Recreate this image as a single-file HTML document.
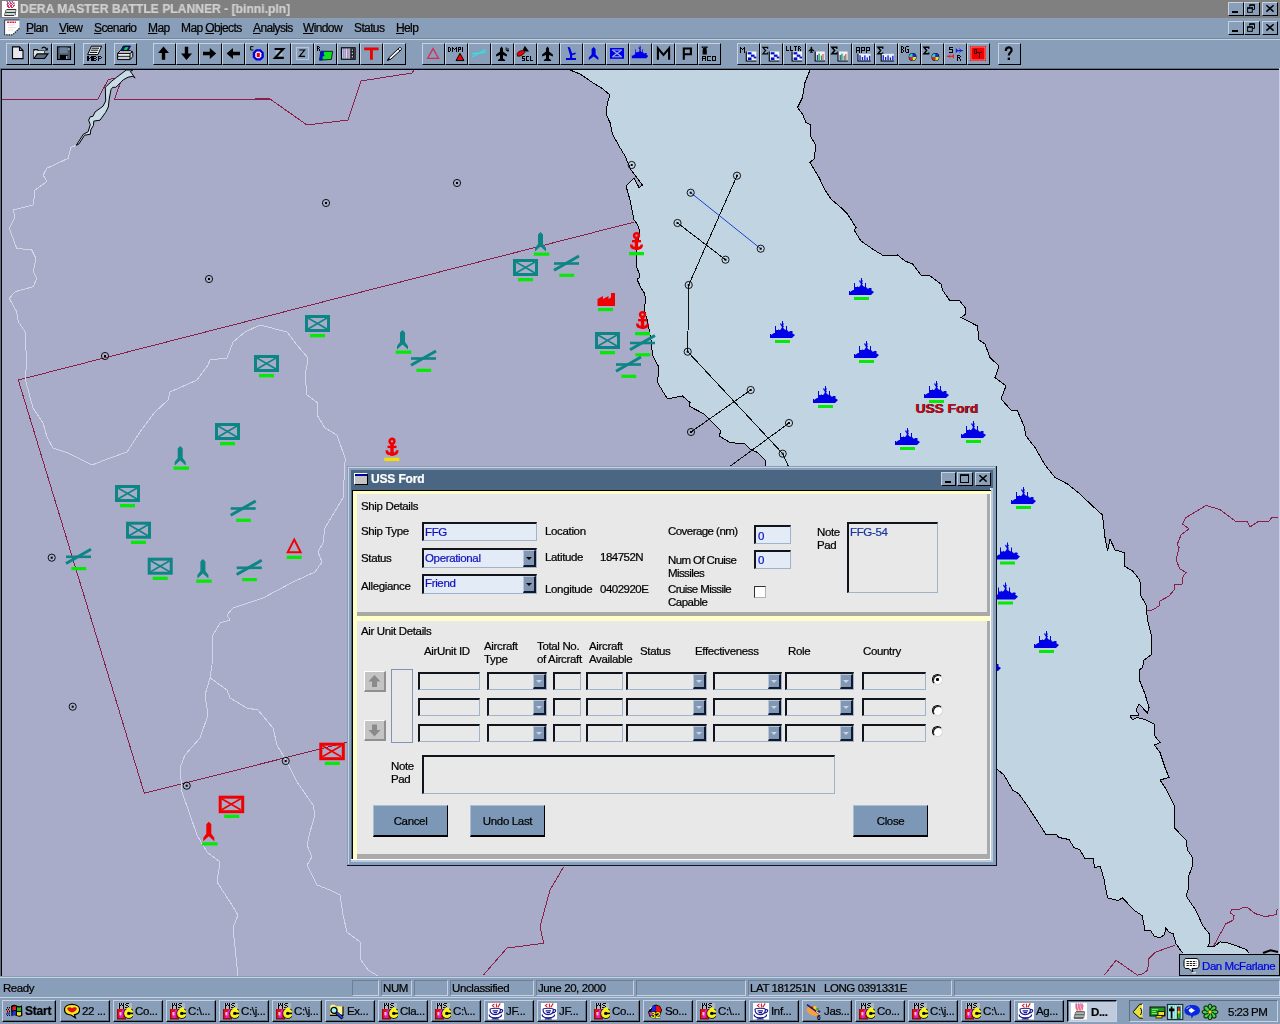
<!DOCTYPE html><html><head><meta charset="utf-8"><title>DERA MASTER BATTLE PLANNER</title><style>
*{box-sizing:border-box;margin:0;padding:0}
html,body{width:1280px;height:1024px;overflow:hidden}
body{position:relative;background:#899eb8;font-family:"Liberation Sans",sans-serif;font-size:11.5px;letter-spacing:-0.35px;color:#000;line-height:14px}
.a{position:absolute}
.t{position:absolute;white-space:nowrap;line-height:14px;height:14px;will-change:transform;-webkit-text-stroke:0.22px currentColor}
.tb{position:absolute;top:43px;width:23px;height:22px;background:#899eb8;border-top:1px solid #c4d2e2;border-left:1px solid #c4d2e2;border-right:1px solid #000;border-bottom:1px solid #000}
.tb svg{position:absolute;left:0;top:0}
.wb{position:absolute;width:16px;height:14px;background:#899eb8;border-top:1px solid #c4d2e2;border-left:1px solid #c4d2e2;border-right:1px solid #000;border-bottom:1px solid #000}
.sp{position:absolute;top:980px;height:16px;border-top:1px solid #6c7f96;border-left:1px solid #6c7f96;border-right:1px solid #c4d2e2;border-bottom:1px solid #c4d2e2}
.tk{position:absolute;top:1000px;width:50px;height:22px;background:#899eb8;border-top:1px solid #c4d2e2;border-left:1px solid #c4d2e2;border-right:1px solid #000;border-bottom:1px solid #000;box-shadow:inset -1px -1px 0 #5d6f86}
.tk .t{left:21px;top:3px;font-size:11.5px;letter-spacing:-0.35px}
.tk svg{position:absolute;left:3px;top:2px}
.f{position:absolute;background:#e8e8e8;border-top:2px solid #10141c;border-left:2px solid #10141c;border-right:1px solid #9fb3cb;border-bottom:1px solid #9fb3cb}
.f.b{background:#e2ebf6;color:#1212c0}
.cb{position:absolute;right:0;top:0;bottom:0;width:13px;background:#8197b3;border-top:1px solid #b8c8dc;border-left:1px solid #b8c8dc;border-right:2px solid #10182c;border-bottom:2px solid #10182c}
.cb:after{content:"";position:absolute;left:2px;top:6px;border-left:3px solid transparent;border-right:3px solid transparent;border-top:3px solid #000}
.cb.g:after{border-top-color:#c8d4e4;left:2px;top:5px}
.btn{position:absolute;width:75px;height:32px;background:#7d97b7;border-top:1px solid #a9bdd4;border-left:1px solid #a9bdd4;border-right:1px solid #000;border-bottom:2px solid #000;text-align:center}
.btn .t{left:0;right:0;top:8px;text-align:center}
.rd{position:absolute;width:11px;height:11px;border-radius:50%;background:#fff;border:1px solid;border-color:#000 #d8d8d8 #d8d8d8 #000;box-shadow:inset 1px 1px 0 #222}
</style></head><body>
<svg id="map" width="1280" height="1024" viewBox="0 0 1280 1024" style="position:absolute;left:0;top:0">
<defs>
<clipPath id="mc"><rect x="2" y="70" width="1277" height="906"/></clipPath>
<g id="ship"><path fill="#0000e6" d="M0,13 L1,13 L1,14 L4,12 L5,12 L5,5 L6,5 L6,9 L8,9 L8,8 L9,9 L10,9 L11,8 L12,6 L10,3 L11,2 L12,4 L12,0 L13,0 L13,2 L14,3 L13,4 L14,6 L13,6 L14,8 L16,9 L16,5 L17,5 L17,9 L18,10 L19,11 L20,10 L22,10 L23,11 L22,12 L25,14 L24,15 L22,17 L0,17 Z"/><rect x="5" y="19" width="15" height="3" fill="#08e808"/></g>
<g id="tbox"><rect x="1.5" y="1.5" width="22" height="14" fill="none" stroke="#0d8585" stroke-width="3"/><path d="M3,3 L22,14 M22,3 L3,14" stroke="#0d8585" stroke-width="1.6" fill="none"/><rect x="5" y="19" width="15" height="3.3" fill="#08e808"/></g>
<g id="rbox"><rect x="1.5" y="1.5" width="22.5" height="14.5" fill="none" stroke="#f00000" stroke-width="3"/><path d="M3,3 L22,14 M22,3 L3,14" stroke="#f00000" stroke-width="1.6" fill="none"/><rect x="5.5" y="19" width="15" height="3.3" fill="#08e808"/></g>
<g id="ty"><path fill="#0d8585" d="M5.5,0 L8,2.5 L8,12 L11,16 L11,19.5 L5.5,14.5 L0,19.5 L0,16 L3,12 L3,2.5 Z"/><rect x="-1.2" y="20.5" width="15.5" height="3.3" fill="#08e808"/></g>
<g id="ry"><path fill="#f00000" d="M5.5,0 L8,2.5 L8,12 L11,16 L11,19.5 L5.5,14.5 L0,19.5 L0,16 L3,12 L3,2.5 Z"/><rect x="-1.2" y="20.5" width="15.5" height="3.3" fill="#08e808"/></g>
<g id="tx"><path d="M0,8.5 H25" stroke="#0d8585" stroke-width="2.6"/><path d="M0,15.2 L25,1" stroke="#0d8585" stroke-width="3"/><rect x="5.4" y="18.7" width="14.8" height="3.2" fill="#08e808"/></g>
<g id="mk"><circle r="3.6" fill="none" stroke="#000" stroke-width="0.9"/><rect x="-1" y="-1" width="2" height="2" fill="#000"/></g>
<g id="anchor"><circle cx="6.5" cy="3.6" r="2.4" fill="none" stroke="#f00000" stroke-width="2.6"/><rect x="2" y="8" width="9" height="2.4" fill="#f00000"/><rect x="4.8" y="6" width="3.4" height="12" fill="#f00000"/><path d="M0,12.6 L2.4,12.6 C2.8,14.6 4,15 6.5,15 C9,15 10.2,14.6 10.6,12.6 L13,12.6 C13,17 10,18 6.5,18 C3,18 0,17 0,12.6 Z" fill="#f00000"/></g>
</defs>
<g clip-path="url(#mc)">
<rect x="0" y="66" width="1280" height="912" fill="#a8acc9"/>
<polygon points="570,70 580,74 592.5,82.5 602.5,88.7 610,95 607.5,102.5 606,114 610,122.5 612.5,134 619,146 625,156 631,170 635,175 642.5,185 639,187.5 634,178 626,186 630,200 634,220 637.8,225 640,232 636.25,250 636.25,265.6 639.4,274.4 639.4,278 637.5,278.4 637.8,281 641.5,288.75 644,292.5 646,299 644,309 647.5,321 651,340 652.5,355 659,367.5 657.5,382.5 665,395 667.5,399 682.5,396 690,402.5 689,406 704,414 721,431 719,436 730,442.5 745,444 750,449 757.5,452.5 765,460 766,466 997.5,769.5 1004,775 1012.5,790 1019,794 1027.5,806 1035,817.5 1046,834.5 1056,834 1059,837.5 1069,839.5 1074,847.5 1080,850 1085,858.4 1093.4,858.4 1094.4,867.8 1100,866 1103.75,878 1107.5,897.8 1117.8,900.6 1122.5,897.8 1133.75,910 1142.2,915.6 1145,930.6 1150.6,930.6 1154.4,936.25 1160,937.75 1164.7,934.4 1165.6,927.8 1169.4,932.5 1173,933.4 1176,943.75 1182.5,953 1190,976 1255,976 1249,953 1246.25,949.4 1227.5,942.8 1220,941.9 1214.4,946.6 1207.8,946.6 1209.7,942.8 1209.7,934.4 1203,926 1195.6,910 1188,898.75 1186.25,895 1188,890.3 1189,875 1192,867.5 1192.5,857.5 1187.5,850 1186,840 1174,827.5 1174,805 1166,789 1160,780 1169,777.5 1165,767.5 1160,752.5 1154.5,745 1160,742.5 1154,735 1154,724 1145,719.5 1137.5,717.5 1132.5,719.5 1130,716 1139,715 1136,710 1139,704 1147.5,713 1149,707.5 1145,694 1139,679 1139,670 1142.5,667.5 1144,660 1151,655 1151,634 1147.5,620 1146,605 1140,594 1141,585 1139,579 1132.5,571 1124,566 1124,552.5 1115,550 1110,539 1107.5,551 1105,537.5 1102.5,515 1092.5,506 1080,494 1067.5,484 1055,477.5 1045,465 1035,447.5 1026,436 1024,426 1017.5,411 1011,410 1001,399 1006,386 995,377.5 999,366 990,357.5 985,344 979,340 977.5,326 961,317.5 966,314 965,307.5 959,300 950,301 942.5,290 941,284 930,276 921,275 912.5,264 905,261 897.5,255 884,256 874,250 861,241 854,230 856,227.5 847.5,214 842.5,209 831,199 825,190 819,177.5 810,162.5 814,159 816,146 810,135 811,125 806,122.5 802.5,114 797.5,107.5 802.5,97.5 805,82.5 810,70" fill="#c0d4e1" stroke="none"/>
<polyline points="0,99.1 97.8,99.1 108.3,79.4 116.2,78.1 120.6,82 114.5,99.1 270,99 307,125 348,120 361,81 412,73 414,70" fill="none" stroke="#8a2048" stroke-width="1" shape-rendering="crispEdges"/>
<polyline points="634.5,222 18.3,380 144.3,793.3 346.7,742.3" fill="none" stroke="#8a2048" stroke-width="1" shape-rendering="crispEdges"/>
<polyline points="1146,610.5 1152.5,610 1159,606 1160,601 1169,596 1174,590 1175,584.5 1182.5,584 1182.5,577.5 1186,572.5 1180,569 1176,560 1179,547.5 1177,545 1181,535 1189,529 1182.5,524 1186,517.5 1206,505.5 1220,509.5 1235,521 1247.5,522 1250,527 1259,521 1269,521 1272.5,517 1278,517" fill="none" stroke="#8a2048" stroke-width="1" shape-rendering="crispEdges"/>
<polyline points="563.7,866.7 550,890 540,926.7 543.7,943.3 507,948 483.7,974.7" fill="none" stroke="#8a2048" stroke-width="1" shape-rendering="crispEdges"/>
<polyline points="1175,945.25 1155.3,952.2 1148.75,958.75 1147.8,970 1143,973.75 1137.5,975.25 1116,960.25 1104.7,974.7" fill="none" stroke="#8a2048" stroke-width="1" shape-rendering="crispEdges"/>
<polyline points="1213.4,946.6 1225.6,924 1233,920.3 1234,915.6 1230.3,912.8 1231.25,910 1238.75,909.6 1243.4,907.2 1248,908 1255.6,913.75 1265,916.6 1276.25,914.7 1277.2,909" fill="none" stroke="#8a2048" stroke-width="1" shape-rendering="crispEdges"/>
<polyline points="76.3,145.3 71,147.5 68.3,158.3 46.7,168.3 43.3,175 46.7,181.7 35,190 33.3,205 13.3,210 15,216.7 9.3,228.3 16.7,248.3 31.7,250 36,258.3 33.3,271.7 36.7,278.3 33.3,286.7 15,291.7 9.3,298.3 16.7,311.7 18.3,321.7 25,331.7 26.7,364.7 25,378 33,408 43,423 47,437 53,448 68,453 92,465 110,458 127,452 140,432 155,412 168,400 170,392 197,380 208,365 210,360 227,358 233,342 245,332 260,325 287,332 297,345 308,358 307,365 305,375 307,395 318,403 317,415 325,428 337,435 345,458 345,462 343,498 325,528 323,543 318,552 322,562 315,572 293,582 263,598 233,608 227,615 230,620 220,623 213,635 212,665 210,678 205,695 208,715 200,738 185,755 180,768 182,792 190,815 197,835 207,852 220,862 217,882 230,902 238,915 233,928 238,976" fill="none" stroke="#d0d8e8" stroke-width="1" shape-rendering="crispEdges"/>
<polyline points="210,678 213,680 227,690 230,698 247,708 258,710 273,728 277,745 287,762 297,782 313,805 315,815 310,832 307,845 312,857 307,865 317,885 330,890 340,895 343,915 347,932 360,942 361,960 368,970 378,976" fill="none" stroke="#d0d8e8" stroke-width="1" shape-rendering="crispEdges"/>
<polygon points="126.3,70 116.2,77.6 111.8,81.1 105.3,87.3 105.7,100.9 103,106.2 95.1,111.9 93,116.3 90.3,116.7 88.6,120.2 90.3,124.6 88.1,131.7 83.3,134.3 76.3,145.3 78.9,144 84.6,135.2 90.3,134.3 90.8,129.9 93.4,125.5 93.8,121.1 100,120.2 105.7,112.3 108.3,107 109.2,99.1 111,89.5 112.7,87.3 115.8,87.3 120.6,82.5 123.3,79.8 128.1,77.2 132.9,76.3 135.1,78.1 132,73.7 130.3,71.5 132.9,70" fill="#c8dce8" stroke="#000" stroke-width="1"/>
<polyline points="570,70 580,74 592.5,82.5 602.5,88.7 610,95 607.5,102.5 606,114 610,122.5 612.5,134 619,146 625,156 631,170 635,175 642.5,185 639,187.5 634,178 626,186 630,200 634,220 637.8,225 640,232 636.25,250 636.25,265.6 639.4,274.4 639.4,278 637.5,278.4 637.8,281 641.5,288.75 644,292.5 646,299 644,309 647.5,321 651,340 652.5,355 659,367.5 657.5,382.5 665,395 667.5,399 682.5,396 690,402.5 689,406 704,414 721,431 719,436 730,442.5 745,444 750,449 757.5,452.5 765,460 766,466" fill="none" stroke="#000" stroke-width="1" shape-rendering="crispEdges"/>
<polyline points="997.5,769.5 1004,775 1012.5,790 1019,794 1027.5,806 1035,817.5 1046,834.5 1056,834 1059,837.5 1069,839.5 1074,847.5 1080,850 1085,858.4 1093.4,858.4 1094.4,867.8 1100,866 1103.75,878 1107.5,897.8 1117.8,900.6 1122.5,897.8 1133.75,910 1142.2,915.6 1145,930.6 1150.6,930.6 1154.4,936.25 1160,937.75 1164.7,934.4 1165.6,927.8 1169.4,932.5 1173,933.4 1176,943.75 1182.5,953" fill="none" stroke="#000" stroke-width="1" shape-rendering="crispEdges"/>
<polyline points="810,70 805,82.5 802.5,97.5 797.5,107.5 802.5,114 806,122.5 811,125 810,135 816,146 814,159 810,162.5 819,177.5 825,190 831,199 842.5,209 847.5,214 856,227.5 854,230 861,241 874,250 884,256 897.5,255 905,261 912.5,264 921,275 930,276 941,284 942.5,290 950,301 959,300 965,307.5 966,314 961,317.5 977.5,326 979,340 985,344 990,357.5 999,366 995,377.5 1006,386 1001,399 1011,410 1017.5,411 1024,426 1026,436 1035,447.5 1045,465 1055,477.5 1067.5,484 1080,494 1092.5,506 1102.5,515 1105,537.5 1107.5,551 1110,539 1115,550 1124,552.5 1124,566 1132.5,571 1139,579 1141,585 1140,594 1146,605 1147.5,620 1151,634 1151,655 1144,660 1142.5,667.5 1139,670 1139,679 1145,694 1149,707.5 1147.5,713 1139,704 1136,710 1139,715 1130,716 1132.5,719.5 1137.5,717.5 1145,719.5 1154,724 1154,735 1160,742.5 1154.5,745 1160,752.5 1165,767.5 1169,777.5 1160,780 1166,789 1174,805 1174,827.5 1186,840 1187.5,850 1192.5,857.5 1192,867.5 1189,875 1188,890.3 1186.25,895 1188,898.75 1195.6,910 1203,926 1209.7,934.4 1209.7,942.8 1207.8,946.6 1214.4,946.6 1220,941.9 1227.5,942.8 1246.25,949.4 1249,953" fill="none" stroke="#000" stroke-width="1" shape-rendering="crispEdges"/>
<polyline points="1263,953 1270.6,950.3 1278,952" fill="none" stroke="#000" stroke-width="2"/>
<polyline points="737,175.7 688.7,285 687.7,351.7 782.7,453.7 790,470" fill="none" stroke="#101010" stroke-width="1" shape-rendering="crispEdges"/>
<polyline points="677.5,223 725.5,259.7" fill="none" stroke="#101010" stroke-width="1" shape-rendering="crispEdges"/>
<polyline points="750.7,390 691,432" fill="none" stroke="#101010" stroke-width="1" shape-rendering="crispEdges"/>
<polyline points="789,423 725,470" fill="none" stroke="#101010" stroke-width="1" shape-rendering="crispEdges"/>
<polyline points="690.7,192.7 760.7,248.7" fill="none" stroke="#2040d0" stroke-width="1"/>
<use href="#mk" x="326" y="203"/>
<use href="#mk" x="209" y="279"/>
<use href="#mk" x="105" y="356"/>
<use href="#mk" x="457" y="183"/>
<use href="#mk" x="631.7" y="165"/>
<use href="#mk" x="737" y="175.7"/>
<use href="#mk" x="690.7" y="192.7"/>
<use href="#mk" x="677.5" y="223"/>
<use href="#mk" x="760.7" y="248.7"/>
<use href="#mk" x="725.5" y="259.7"/>
<use href="#mk" x="688.7" y="285"/>
<use href="#mk" x="687.7" y="351.7"/>
<use href="#mk" x="750.7" y="390"/>
<use href="#mk" x="691" y="432"/>
<use href="#mk" x="789" y="423"/>
<use href="#mk" x="782.7" y="453.7"/>
<use href="#mk" x="51.7" y="557.7"/>
<use href="#mk" x="72.7" y="706.7"/>
<use href="#mk" x="186.7" y="785.7"/>
<use href="#mk" x="285.7" y="761"/>
<use href="#ship" x="849" y="278"/>
<use href="#ship" x="770" y="321"/>
<use href="#ship" x="854" y="341"/>
<use href="#ship" x="813" y="386"/>
<use href="#ship" x="924" y="381"/>
<use href="#ship" x="895" y="428"/>
<use href="#ship" x="961" y="421"/>
<use href="#ship" x="1011" y="487"/>
<use href="#ship" x="995" y="542.5"/>
<use href="#ship" x="993" y="582.5"/>
<use href="#ship" x="1034" y="631"/>
<use href="#ship" x="976" y="654"/>
<use href="#tbox" x="513" y="259"/>
<use href="#tbox" x="305" y="315"/>
<use href="#tbox" x="254" y="355"/>
<use href="#tbox" x="595" y="332"/>
<use href="#tbox" x="215" y="423"/>
<use href="#tbox" x="115" y="485"/>
<use href="#tbox" x="126" y="521.7"/>
<use href="#tbox" x="147.7" y="557.7"/>
<use href="#ty" x="535" y="232"/>
<use href="#ty" x="397" y="330"/>
<use href="#ty" x="174.7" y="446"/>
<use href="#ty" x="197.4" y="559"/>
<use href="#tx" x="554" y="255"/>
<use href="#tx" x="411" y="350"/>
<use href="#tx" x="630" y="334.5"/>
<use href="#tx" x="616" y="356"/>
<use href="#tx" x="230.7" y="500"/>
<use href="#tx" x="66" y="548.3"/>
<use href="#tx" x="236.7" y="559.3"/>
<use href="#rbox" x="319.3" y="742.7"/>
<use href="#rbox" x="218.7" y="795.7"/>
<use href="#ry" x="203.3" y="821.7"/>
<use href="#anchor" x="630" y="232"/><rect x="629" y="252" width="15" height="3.3" fill="#08e808"/>
<use href="#anchor" x="636" y="311"/><rect x="635" y="332" width="15" height="3.3" fill="#08e808"/>
<use href="#anchor" x="385.5" y="437.7"/><rect x="384.3" y="457.7" width="15" height="3.3" fill="#f0e000"/>
<path fill="#f00000" d="M597.5,306 V299 L603,296 V299 L608.5,296 V299 L611,297.5 V293 H615 V306 Z"/><rect x="598" y="308" width="15" height="3.2" fill="#08e808"/>
<path fill="none" stroke="#f00000" stroke-width="1.9" d="M294.2,539.5 L300.7,552.3 L287.7,552.3 Z"/><rect x="286.7" y="555.7" width="15" height="3.3" fill="#08e808"/>
<text x="916" y="413.2" font-family="Liberation Sans, sans-serif" font-weight="bold" font-size="13.5" letter-spacing="0.15" fill="#000">USS Ford</text>
<text x="915.2" y="412.6" font-family="Liberation Sans, sans-serif" font-weight="bold" font-size="13.5" letter-spacing="0.15" fill="#c80818">USS Ford</text>
</g>
</svg>
<div class="a" style="left:0;top:66px;width:1280px;height:3px;background:#899eb8"></div>
<div class="a" style="left:0;top:68px;width:1280px;height:1px;background:#5f7188"></div>
<div class="a" style="left:1px;top:69px;width:1278px;height:1px;background:#000"></div>
<div class="a" style="left:0;top:68px;width:1px;height:909px;background:#5f7188"></div>
<div class="a" style="left:1px;top:69px;width:1px;height:907px;background:#000"></div>
<div class="a" style="left:1279px;top:68px;width:1px;height:909px;background:#c4d2e2"></div>
<div class="a" style="left:0;top:0;width:1280px;height:18px;background:#808080"></div>
<svg width="16" height="16" viewBox="0 0 16 16" style="position:absolute;left:2px;top:1px"><rect width="16" height="16" fill="#fff"/><path d="M4.5,0.5 H12 M5,1.5 H13 M4.5,3.5 H12.5" stroke="#9060b0" stroke-width="1" stroke-dasharray="1.5 1"/><path d="M5,2.5 H12.5 M5,4.5 H13 M5,5.5 H12 M6,6.5 H11" stroke="#e83050" stroke-width="1" stroke-dasharray="2 1"/><path d="M4.5,8.5 H14 M3.5,11.5 H13 M2.5,14.5 H12" stroke="#303838" stroke-width="1.2"/><path d="M4,9 L2.5,14.5 M14,8.5 L13,14.5" stroke="#505858" stroke-width="1" fill="none"/><path d="M4,10 H13.5 M3.4,13 H13" stroke="#a0a8a8" stroke-width="1"/></svg>
<div class="t" style="left:20px;top:1px;font-weight:bold;font-size:13px;letter-spacing:0;color:#d0d0d0;line-height:16px;height:16px;transform:scaleX(0.933);transform-origin:0 0">DERA MASTER BATTLE PLANNER - [binni.pln]</div>
<div class="wb" style="left:1228px;top:2px"><svg width="16" height="14" viewBox="0 0 16 14" style="position:absolute;left:-1px;top:-1px" shape-rendering="auto"><rect x="4" y="9" width="6" height="2" fill="#000"/></svg></div><div class="wb" style="left:1244px;top:2px"><svg width="16" height="14" viewBox="0 0 16 14" style="position:absolute;left:-1px;top:-1px" shape-rendering="auto"><path d="M5.8,4.8 V3 H10.5 V7.4 H8.8" fill="none" stroke="#000" stroke-width="1"/><rect x="5.3" y="2.3" width="5.7" height="1.4" fill="#000"/><rect x="3.6" y="6" width="4.7" height="4.3" fill="none" stroke="#000" stroke-width="1"/><rect x="3.1" y="5.3" width="5.7" height="1.4" fill="#000"/></svg></div><div class="wb" style="left:1262px;top:2px"><svg width="16" height="14" viewBox="0 0 16 14" style="position:absolute;left:-1px;top:-1px" shape-rendering="auto"><path d="M4.4,3.2 L11.6,9.6 M11.6,3.2 L4.4,9.6" stroke="#000" stroke-width="1.5"/></svg></div>
<div class="a" style="left:0;top:18px;width:1280px;height:20px;background:#899eb8"></div>
<svg width="17" height="17" viewBox="0 0 17 17" style="position:absolute;left:4px;top:19px"><path d="M0.6,1 H15.4 V9 L8.5,15.6 H0.6 Z" fill="#fff"/><path d="M0.6,15.8 V1 H15.4" fill="none" stroke="#202830" stroke-width="1" stroke-dasharray="1 0"/><path d="M15.4,9.4 L8.6,15.8 H0.6" fill="none" stroke="#101010" stroke-width="1.2" stroke-dasharray="1.2 1.2"/><path d="M3,3.2 H12" stroke="#e02040" stroke-width="1.6" stroke-dasharray="2 0.6"/><path d="M4,6 H11 M4,8.4 H12 M4,11 H9" stroke="#e8c8d4" stroke-width="0.7"/></svg>
<div class="t" style="left:26px;top:21px;font-size:12px;letter-spacing:-0.62px"><u>P</u>lan</div>
<div class="t" style="left:59px;top:21px;font-size:12px;letter-spacing:-0.62px"><u>V</u>iew</div>
<div class="t" style="left:94px;top:21px;font-size:12px;letter-spacing:-0.62px"><u>S</u>cenario</div>
<div class="t" style="left:148px;top:21px;font-size:12px;letter-spacing:-0.62px"><u>M</u>ap</div>
<div class="t" style="left:181px;top:21px;font-size:12px;letter-spacing:-0.62px">Map <u>O</u>bjects</div>
<div class="t" style="left:253px;top:21px;font-size:12px;letter-spacing:-0.62px"><u>A</u>nalysis</div>
<div class="t" style="left:303px;top:21px;font-size:12px;letter-spacing:-0.62px"><u>W</u>indow</div>
<div class="t" style="left:354px;top:21px;font-size:12px;letter-spacing:-0.62px">Status</div>
<div class="t" style="left:396px;top:21px;font-size:12px;letter-spacing:-0.62px"><u>H</u>elp</div>
<div class="wb" style="left:1228px;top:21px"><svg width="16" height="14" viewBox="0 0 16 14" style="position:absolute;left:-1px;top:-1px" shape-rendering="auto"><rect x="4" y="9" width="6" height="2" fill="#000"/></svg></div><div class="wb" style="left:1244px;top:21px"><svg width="16" height="14" viewBox="0 0 16 14" style="position:absolute;left:-1px;top:-1px" shape-rendering="auto"><path d="M5.8,4.8 V3 H10.5 V7.4 H8.8" fill="none" stroke="#000" stroke-width="1"/><rect x="5.3" y="2.3" width="5.7" height="1.4" fill="#000"/><rect x="3.6" y="6" width="4.7" height="4.3" fill="none" stroke="#000" stroke-width="1"/><rect x="3.1" y="5.3" width="5.7" height="1.4" fill="#000"/></svg></div><div class="wb" style="left:1262px;top:21px"><svg width="16" height="14" viewBox="0 0 16 14" style="position:absolute;left:-1px;top:-1px" shape-rendering="auto"><path d="M4.4,3.2 L11.6,9.6 M11.6,3.2 L4.4,9.6" stroke="#000" stroke-width="1.5"/></svg></div>
<div class="a" style="left:0;top:38px;width:1280px;height:1px;background:#74889f"></div>
<div class="a" style="left:0;top:39px;width:1280px;height:1px;background:#c4d2e2"></div>
<div class="tb" style="left:6px"><svg width="23" height="22" viewBox="0 0 23 22" style="position:absolute;left:-1px;top:-1px" shape-rendering="auto"><path d="M6.5,3.9 H13.5 L17,7.4 V15.6 H6.5 Z" fill="#e6e6ee" stroke="#000" stroke-width="1.1"/><path d="M13.5,3.9 V7.4 H17" fill="none" stroke="#000" stroke-width="1.1"/></svg></div>
<div class="tb" style="left:29px"><svg width="23" height="22" viewBox="0 0 23 22" style="position:absolute;left:-1px;top:-1px" shape-rendering="auto"><path d="M4.9,15.3 V6.6 H8.4 L9.4,8 H15 V10.6" fill="#dcdce0" stroke="#000" stroke-width="1.1"/><path d="M5,8 H15 V11 H8 L5,15 Z" fill="#e4e4e4"/><path d="M4.9,15.5 L8.2,10.9 H19 L15.6,15.5 Z" fill="#5c6c80" stroke="#000" stroke-width="1.1"/><path d="M12.7,5.6 C13.6,3.6 16.4,3.4 17.5,6.2" fill="none" stroke="#000" stroke-width="1.1"/><path d="M15.6,7.6 H18.8 V4.4 Z" fill="#000"/></svg></div>
<div class="tb" style="left:52px"><svg width="23" height="22" viewBox="0 0 23 22" style="position:absolute;left:-1px;top:-1px" shape-rendering="auto"><rect x="5.5" y="3.9" width="13" height="12.6" fill="#4e5a6a" stroke="#000" stroke-width="1.1"/><rect x="7.6" y="4.4" width="8" height="6" fill="#6c8098"/><rect x="16.4" y="5" width="1" height="2" fill="#c8d0dc"/><rect x="8" y="12" width="8" height="4.4" fill="#000"/><rect x="14" y="12.8" width="1.6" height="3.2" fill="#9aa8bc"/></svg></div>
<div class="tb" style="left:83px"><svg width="23" height="22" viewBox="0 0 23 22" style="position:absolute;left:-1px;top:-1px" shape-rendering="auto"><path d="M8.4,3.2 H18.6 L15,11.6 H4.6 Z" fill="#f2f4f8" stroke="#000" stroke-width="1"/><path d="M8.6,5.2 H16 M7.8,7.2 H15.2 M6.8,9.4 H14.2" stroke="#000" stroke-width="1"/><rect x="4" y="13" width="1" height="1" fill="#000"/><rect x="8" y="13" width="1" height="1" fill="#000"/><rect x="10" y="13" width="3" height="1" fill="#000"/><rect x="15" y="13" width="3" height="1" fill="#000"/><rect x="4" y="14" width="2" height="1" fill="#000"/><rect x="7" y="14" width="2" height="1" fill="#000"/><rect x="10" y="14" width="1" height="1" fill="#000"/><rect x="13" y="14" width="1" height="1" fill="#000"/><rect x="15" y="14" width="1" height="1" fill="#000"/><rect x="18" y="14" width="1" height="1" fill="#000"/><rect x="4" y="15" width="1" height="1" fill="#000"/><rect x="6" y="15" width="1" height="1" fill="#000"/><rect x="8" y="15" width="1" height="1" fill="#000"/><rect x="10" y="15" width="3" height="1" fill="#000"/><rect x="15" y="15" width="3" height="1" fill="#000"/><rect x="4" y="16" width="1" height="1" fill="#000"/><rect x="8" y="16" width="1" height="1" fill="#000"/><rect x="10" y="16" width="1" height="1" fill="#000"/><rect x="13" y="16" width="1" height="1" fill="#000"/><rect x="15" y="16" width="1" height="1" fill="#000"/><rect x="4" y="17" width="1" height="1" fill="#000"/><rect x="8" y="17" width="1" height="1" fill="#000"/><rect x="10" y="17" width="3" height="1" fill="#000"/><rect x="15" y="17" width="1" height="1" fill="#000"/><rect x="5" y="13" width="1" height="1" fill="#000"/><rect x="9" y="13" width="1" height="1" fill="#000"/><rect x="5" y="14" width="1" height="1" fill="#000"/><rect x="9" y="14" width="1" height="1" fill="#000"/><rect x="5" y="15" width="1" height="1" fill="#000"/><rect x="9" y="15" width="1" height="1" fill="#000"/><rect x="5" y="16" width="1" height="1" fill="#000"/><rect x="9" y="16" width="1" height="1" fill="#000"/><rect x="5" y="17" width="1" height="1" fill="#000"/><rect x="9" y="17" width="1" height="1" fill="#000"/></svg></div>
<div class="tb" style="left:114px"><svg width="23" height="22" viewBox="0 0 23 22" style="position:absolute;left:-1px;top:-1px" shape-rendering="auto"><path d="M6.4,8 L9.4,3 H16.5 L14,8 Z" fill="#0018a8" stroke="#000" stroke-width="0.8"/><path d="M9.8,6.8 L11.4,4.2 L14.3,4 L12.7,6.9 Z" fill="#10e020"/><path d="M3.6,10.4 L6.4,7.6 H16.6 L18.8,9.4 V13.6 L16,16.6 H3.6 Z" fill="#c8ccd4" stroke="#000" stroke-width="1"/><path d="M3.6,10.4 H16 L18.8,8.6 M16,10.4 V16.6 M3.8,13.2 H16" stroke="#000" stroke-width="1" fill="none"/><rect x="4.4" y="11.2" width="11" height="1.4" fill="#f4f4f4"/></svg></div>
<div class="tb" style="left:153px"><svg width="23" height="22" viewBox="0 0 23 22" style="position:absolute;left:-1px;top:-1px" shape-rendering="auto"><path d="M10.5,3.6 L16,10 H12.2 V16.8 H8.8 V10 H5 Z" fill="#000"/></svg></div>
<div class="tb" style="left:176px"><svg width="23" height="22" viewBox="0 0 23 22" style="position:absolute;left:-1px;top:-1px" shape-rendering="auto"><path d="M10.5,17 L16,10.6 H12.2 V3.8 H8.8 V10.6 H5 Z" fill="#000"/></svg></div>
<div class="tb" style="left:199px"><svg width="23" height="22" viewBox="0 0 23 22" style="position:absolute;left:-1px;top:-1px" shape-rendering="auto"><path d="M17.2,10.5 L10.8,5 V8.8 H4 V12.2 H10.8 V16 Z" fill="#000"/></svg></div>
<div class="tb" style="left:222px"><svg width="23" height="22" viewBox="0 0 23 22" style="position:absolute;left:-1px;top:-1px" shape-rendering="auto"><path d="M4.6,10.5 L11,5 V8.8 H18 V12.2 H11 V16 Z" fill="#000"/></svg></div>
<div class="tb" style="left:245px"><svg width="23" height="22" viewBox="0 0 23 22" style="position:absolute;left:-1px;top:-1px" shape-rendering="auto"><path d="M11,6.2 H15.6 L18.8,9.4 V14.4 L15.6,17.6 H11 L7.8,14.4 V9.4 Z" fill="#0000e0"/><path d="M11.8,8.6 H14.8 L16.4,10.2 V13.6 L14.8,15.2 H11.8 L10.2,13.6 V10.2 Z" fill="#f4e4f0"/><rect x="11.8" y="10" width="3" height="4" fill="#e80000"/><path d="M8.4,3.6 H5.6 V7 H8.4" fill="none" stroke="#000" stroke-width="1"/></svg></div>
<div class="tb" style="left:268px"><svg width="23" height="22" viewBox="0 0 23 22" style="position:absolute;left:-1px;top:-1px" shape-rendering="auto"><rect x="8" y="7.4" width="6.4" height="6" fill="#a9b8cb"/><path d="M6.6,6 H15.2 L7,14.9 H15.8" fill="none" stroke="#000" stroke-width="2.1" stroke-linejoin="miter"/></svg></div>
<div class="tb" style="left:291px"><svg width="23" height="22" viewBox="0 0 23 22" style="position:absolute;left:-1px;top:-1px" shape-rendering="auto"><rect x="5.5" y="4.5" width="12" height="12" fill="none" stroke="#b7c7db" stroke-width="1.2"/><path d="M8.3,7 H13.6 L8.4,13.3 H14" fill="none" stroke="#000" stroke-width="1.15"/></svg></div>
<div class="tb" style="left:314px"><svg width="23" height="22" viewBox="0 0 23 22" style="position:absolute;left:-1px;top:-1px" shape-rendering="auto"><rect x="3" y="3" width="2" height="1" fill="#000"/><rect x="3" y="4" width="1" height="1" fill="#000"/><rect x="5" y="4" width="1" height="1" fill="#000"/><rect x="3" y="5" width="2" height="1" fill="#000"/><rect x="3" y="6" width="1" height="1" fill="#000"/><rect x="5" y="6" width="1" height="1" fill="#000"/><rect x="3" y="7" width="1" height="1" fill="#000"/><rect x="5" y="7" width="1" height="1" fill="#000"/><path d="M6.8,8.2 L18.6,8.4 L17.4,16.4 L5.6,17.2 Z" fill="#10e020" stroke="#000" stroke-width="0.8"/><path d="M6.8,8.2 L10.4,8.3 L9.6,10.4 L10.6,12.6 L8.4,14 L9,17 L5.6,17.2 Z" fill="#0010d0"/></svg></div>
<div class="tb" style="left:337px"><svg width="23" height="22" viewBox="0 0 23 22" style="position:absolute;left:-1px;top:-1px" shape-rendering="auto"><rect x="4.5" y="4.8" width="13.6" height="11.4" fill="#dfe6f0" stroke="#000" stroke-width="1.2"/><rect x="13.2" y="5.2" width="4.4" height="10.6" fill="#1c1c24"/><path d="M6.4,5.5 V15.6 M8.4,5.5 V15.6 M10.4,5.5 V15.6 M12.2,5.5 V15.6" stroke="#2030b0" stroke-width="0.9" stroke-dasharray="1 1"/><path d="M7.4,5.5 V15.6 M11.3,5.5 V15.6" stroke="#d03030" stroke-width="0.7" stroke-dasharray="1 1"/><path d="M15.4,6.4 V15" stroke="#b8c0cc" stroke-width="1.2" stroke-dasharray="1.6 1.6"/></svg></div>
<div class="tb" style="left:360px"><svg width="23" height="22" viewBox="0 0 23 22" style="position:absolute;left:-1px;top:-1px" shape-rendering="auto"><path d="M4.2,4.6 H18.6 V7.2 H12.9 V16.7 H10 V7.2 H4.2 Z" fill="#f00000"/></svg></div>
<div class="tb" style="left:383px"><svg width="23" height="22" viewBox="0 0 23 22" style="position:absolute;left:-1px;top:-1px" shape-rendering="auto"><path d="M4.4,17.4 L6,14.6 L16,5 C17.4,3.6 19.4,5.6 18,7 L7.8,16.2 Z" fill="#f4f4f4" stroke="#000" stroke-width="1"/><path d="M4.2,17.8 L5.8,14.8 L7.6,16.4 Z" fill="#000"/><path d="M15,6 L17,8" stroke="#000" stroke-width="0.8"/></svg></div>
<div class="tb" style="left:422px"><svg width="23" height="22" viewBox="0 0 23 22" style="position:absolute;left:-1px;top:-1px" shape-rendering="auto"><path d="M11,5.6 L16.6,15.4 H5.6 Z" fill="none" stroke="#e0284c" stroke-width="1.2"/></svg></div>
<div class="tb" style="left:445px"><svg width="23" height="22" viewBox="0 0 23 22" style="position:absolute;left:-1px;top:-1px" shape-rendering="auto"><rect x="3" y="4" width="2" height="1" fill="#000"/><rect x="7" y="4" width="1" height="1" fill="#000"/><rect x="11" y="4" width="1" height="1" fill="#000"/><rect x="13" y="4" width="3" height="1" fill="#000"/><rect x="17" y="4" width="1" height="1" fill="#000"/><rect x="3" y="5" width="1" height="1" fill="#000"/><rect x="5" y="5" width="1" height="1" fill="#000"/><rect x="7" y="5" width="2" height="1" fill="#000"/><rect x="10" y="5" width="2" height="1" fill="#000"/><rect x="13" y="5" width="1" height="1" fill="#000"/><rect x="15" y="5" width="1" height="1" fill="#000"/><rect x="17" y="5" width="1" height="1" fill="#000"/><rect x="3" y="6" width="1" height="1" fill="#000"/><rect x="5" y="6" width="1" height="1" fill="#000"/><rect x="7" y="6" width="1" height="1" fill="#000"/><rect x="9" y="6" width="1" height="1" fill="#000"/><rect x="11" y="6" width="1" height="1" fill="#000"/><rect x="13" y="6" width="3" height="1" fill="#000"/><rect x="17" y="6" width="1" height="1" fill="#000"/><rect x="3" y="7" width="1" height="1" fill="#000"/><rect x="5" y="7" width="1" height="1" fill="#000"/><rect x="7" y="7" width="1" height="1" fill="#000"/><rect x="11" y="7" width="1" height="1" fill="#000"/><rect x="13" y="7" width="1" height="1" fill="#000"/><rect x="17" y="7" width="1" height="1" fill="#000"/><rect x="3" y="8" width="2" height="1" fill="#000"/><rect x="7" y="8" width="1" height="1" fill="#000"/><rect x="11" y="8" width="1" height="1" fill="#000"/><rect x="13" y="8" width="1" height="1" fill="#000"/><rect x="17" y="8" width="1" height="1" fill="#000"/><path d="M15,10.4 L19,17.6 H11 Z" fill="#f00000" stroke="#000" stroke-width="1"/></svg></div>
<div class="tb" style="left:468px"><svg width="23" height="22" viewBox="0 0 23 22" style="position:absolute;left:-1px;top:-1px" shape-rendering="auto"><path d="M4,10.8 L18,9.2" stroke="#38dce0" stroke-width="1.4"/><path d="M4.4,13.8 L17.6,6.4" stroke="#38dce0" stroke-width="1.4"/></svg></div>
<div class="tb" style="left:491px"><svg width="23" height="22" viewBox="0 0 23 22" style="position:absolute;left:-1px;top:-1px" shape-rendering="auto"><path d="M10.5,3.6 L12.0,5.4 V8.6 L15.9,11.6 V13.4 L12.0,12 V15.4 L14.1,17 V18 H6.9 V17 L9.0,15.4 V12 L5.1,13.4 V11.6 L9.0,8.6 V5.4 Z" fill="#000"/><path d="M15.2,4.4 V7.4 H18 M17,5 V9" stroke="#000" stroke-width="0.9" fill="none"/></svg></div>
<div class="tb" style="left:514px"><svg width="23" height="22" viewBox="0 0 23 22" style="position:absolute;left:-1px;top:-1px" shape-rendering="auto"><path d="M9,6.6 L10.8,2.8 L15,8.6 L10.4,8.4 Z" fill="#000"/><path d="M3.2,11.6 C2.6,9.4 6.4,7.4 9.6,7.2 L10.8,9.4 C9.6,11.6 5.6,13.8 3.6,13.2 Z" fill="#f00000" stroke="#000" stroke-width="0.7"/><rect x="8" y="13" width="3" height="1" fill="#000"/><rect x="12" y="13" width="3" height="1" fill="#000"/><rect x="16" y="13" width="1" height="1" fill="#000"/><rect x="8" y="14" width="1" height="1" fill="#000"/><rect x="12" y="14" width="1" height="1" fill="#000"/><rect x="16" y="14" width="1" height="1" fill="#000"/><rect x="8" y="15" width="3" height="1" fill="#000"/><rect x="12" y="15" width="1" height="1" fill="#000"/><rect x="16" y="15" width="1" height="1" fill="#000"/><rect x="10" y="16" width="1" height="1" fill="#000"/><rect x="12" y="16" width="1" height="1" fill="#000"/><rect x="16" y="16" width="1" height="1" fill="#000"/><rect x="8" y="17" width="3" height="1" fill="#000"/><rect x="12" y="17" width="3" height="1" fill="#000"/><rect x="16" y="17" width="3" height="1" fill="#000"/></svg></div>
<div class="tb" style="left:537px"><svg width="23" height="22" viewBox="0 0 23 22" style="position:absolute;left:-1px;top:-1px" shape-rendering="auto"><path d="M10.5,3.6 L12.0,5.4 V8.6 L15.9,11.6 V13.4 L12.0,12 V15.4 L14.1,17 V18 H6.9 V17 L9.0,15.4 V12 L5.1,13.4 V11.6 L9.0,8.6 V5.4 Z" fill="#000"/></svg></div>
<div class="tb" style="left:560px"><svg width="23" height="22" viewBox="0 0 23 22" style="position:absolute;left:-1px;top:-1px" shape-rendering="auto"><path d="M7.6,4 L9.8,4.2 L12.2,10.6 L15.4,9.6 L15.8,11 L12.2,12.2 V15 H16 V17 H6 V15 H10 V12 Z" fill="#0000e6"/></svg></div>
<div class="tb" style="left:583px"><svg width="23" height="22" viewBox="0 0 23 22" style="position:absolute;left:-1px;top:-1px" shape-rendering="auto"><path d="M10.6,4 L12.6,6 V11.4 L15.4,14.4 V17 L10.6,13.6 L5.8,17 V14.4 L8.6,11.4 V6 Z" fill="#0000e6"/></svg></div>
<div class="tb" style="left:606px"><svg width="23" height="22" viewBox="0 0 23 22" style="position:absolute;left:-1px;top:-1px" shape-rendering="auto"><rect x="4" y="5" width="14" height="10.8" fill="#0000e6"/><path d="M6.4,7 L15.6,13.8 M15.6,7 L6.4,13.8" stroke="#9fb4e8" stroke-width="1.2"/><path d="M6.4,7 H15.6 M6.4,13.8 H15.6" stroke="#9fb4e8" stroke-width="1"/></svg></div>
<div class="tb" style="left:629px"><svg width="23" height="22" viewBox="0 0 23 22" style="position:absolute;left:-1px;top:-1px" shape-rendering="auto"><path transform="translate(2.8,2.6) scale(0.66,0.75)" fill="#0000e6" d="M0,13 L1,13 L1,14 L4,12 L5,12 L5,5 L6,5 L6,9 L8,9 L8,8 L9,9 L10,9 L11,8 L12,6 L10,3 L11,2 L12,4 L12,0 L13,0 L13,2 L14,3 L13,4 L14,6 L13,6 L14,8 L16,9 L16,5 L17,5 L17,9 L18,10 L19,11 L20,10 L22,10 L23,11 L22,12 L25,14 L24,15 L22,17 L0,17 Z"/></svg></div>
<div class="tb" style="left:652px"><svg width="23" height="22" viewBox="0 0 23 22" style="position:absolute;left:-1px;top:-1px" shape-rendering="auto"><path d="M5.9,16.7 V5.4 L11.5,12 L17.1,5.4 V16.7" fill="none" stroke="#000" stroke-width="2.1" stroke-linejoin="miter"/></svg></div>
<div class="tb" style="left:675px"><svg width="23" height="22" viewBox="0 0 23 22" style="position:absolute;left:-1px;top:-1px" shape-rendering="auto"><path d="M8.8,16.7 V5.5 H15.9 V11.2 H8.8" fill="none" stroke="#000" stroke-width="2.1"/></svg></div>
<div class="tb" style="left:698px"><svg width="23" height="22" viewBox="0 0 23 22" style="position:absolute;left:-1px;top:-1px" shape-rendering="auto"><path d="M3.7,3.4 H9.6 V5 H8.6 L8.2,6.6 H8.8 V11.6 H4.6 V6.6 H5.2 L4.8,5 H3.7 Z" fill="#000"/><path d="M5,4.2 H8.4" stroke="#899eb8" stroke-width="0.7" stroke-dasharray="0.8 0.8"/><rect x="4" y="13" width="4" height="1" fill="#000"/><rect x="9" y="13" width="4" height="1" fill="#000"/><rect x="14" y="13" width="4" height="1" fill="#000"/><rect x="4" y="14" width="1" height="1" fill="#000"/><rect x="7" y="14" width="1" height="1" fill="#000"/><rect x="9" y="14" width="1" height="1" fill="#000"/><rect x="14" y="14" width="1" height="1" fill="#000"/><rect x="17" y="14" width="1" height="1" fill="#000"/><rect x="4" y="15" width="4" height="1" fill="#000"/><rect x="9" y="15" width="1" height="1" fill="#000"/><rect x="14" y="15" width="1" height="1" fill="#000"/><rect x="17" y="15" width="1" height="1" fill="#000"/><rect x="4" y="16" width="1" height="1" fill="#000"/><rect x="7" y="16" width="1" height="1" fill="#000"/><rect x="9" y="16" width="1" height="1" fill="#000"/><rect x="14" y="16" width="1" height="1" fill="#000"/><rect x="17" y="16" width="1" height="1" fill="#000"/><rect x="4" y="17" width="1" height="1" fill="#000"/><rect x="7" y="17" width="1" height="1" fill="#000"/><rect x="9" y="17" width="4" height="1" fill="#000"/><rect x="14" y="17" width="4" height="1" fill="#000"/></svg></div>
<div class="tb" style="left:737px"><svg width="23" height="22" viewBox="0 0 23 22" style="position:absolute;left:-1px;top:-1px" shape-rendering="auto"><rect x="3" y="4" width="1" height="1" fill="#000"/><rect x="7" y="4" width="1" height="1" fill="#000"/><rect x="3" y="5" width="2" height="1" fill="#000"/><rect x="6" y="5" width="2" height="1" fill="#000"/><rect x="3" y="6" width="1" height="1" fill="#000"/><rect x="5" y="6" width="1" height="1" fill="#000"/><rect x="7" y="6" width="1" height="1" fill="#000"/><rect x="3" y="7" width="1" height="1" fill="#000"/><rect x="7" y="7" width="1" height="1" fill="#000"/><rect x="3" y="8" width="1" height="1" fill="#000"/><rect x="7" y="8" width="1" height="1" fill="#000"/><rect x="3" y="9" width="1" height="1" fill="#000"/><rect x="7" y="9" width="1" height="1" fill="#000"/><rect x="9.3" y="8.5" width="10" height="9.5" fill="#f4f6fa"/><path d="M9.3,8.5 V18 H19.3" stroke="#000" stroke-width="1.1" fill="none"/><rect x="10.700000000000001" y="9.2" width="3.8" height="2.2" fill="#0010d0"/><rect x="13.9" y="11.6" width="3.6" height="2.2" fill="#0010d0"/><rect x="16.700000000000003" y="13.6" width="2.6" height="1.8" fill="#0010d0"/><rect x="10.9" y="14.4" width="3.6" height="2.6" fill="#0010d0"/></svg></div>
<div class="tb" style="left:760px"><svg width="23" height="22" viewBox="0 0 23 22" style="position:absolute;left:-1px;top:-1px" shape-rendering="auto"><path d="M7.6,5.699999999999999 V4.3 H2.9 L5.485,7.55 L2.9,10.8 H7.6 V9.4" fill="none" stroke="#000" stroke-width="1.2"/><rect x="9.3" y="8.5" width="10" height="9.5" fill="#f4f6fa"/><path d="M9.3,8.5 V18 H19.3" stroke="#000" stroke-width="1.1" fill="none"/><rect x="10.700000000000001" y="9.2" width="3.8" height="2.2" fill="#0010d0"/><rect x="13.9" y="11.6" width="3.6" height="2.2" fill="#0010d0"/><rect x="16.700000000000003" y="13.6" width="2.6" height="1.8" fill="#0010d0"/><rect x="10.9" y="14.4" width="3.6" height="2.6" fill="#0010d0"/></svg></div>
<div class="tb" style="left:783px"><svg width="23" height="22" viewBox="0 0 23 22" style="position:absolute;left:-1px;top:-1px" shape-rendering="auto"><rect x="3" y="3" width="1" height="1" fill="#000"/><rect x="7" y="3" width="1" height="1" fill="#000"/><rect x="11" y="3" width="3" height="1" fill="#000"/><rect x="15" y="3" width="2" height="1" fill="#000"/><rect x="3" y="4" width="1" height="1" fill="#000"/><rect x="7" y="4" width="1" height="1" fill="#000"/><rect x="12" y="4" width="1" height="1" fill="#000"/><rect x="15" y="4" width="1" height="1" fill="#000"/><rect x="17" y="4" width="1" height="1" fill="#000"/><rect x="3" y="5" width="1" height="1" fill="#000"/><rect x="7" y="5" width="1" height="1" fill="#000"/><rect x="12" y="5" width="1" height="1" fill="#000"/><rect x="15" y="5" width="2" height="1" fill="#000"/><rect x="3" y="6" width="1" height="1" fill="#000"/><rect x="7" y="6" width="1" height="1" fill="#000"/><rect x="12" y="6" width="1" height="1" fill="#000"/><rect x="15" y="6" width="1" height="1" fill="#000"/><rect x="17" y="6" width="1" height="1" fill="#000"/><rect x="3" y="7" width="3" height="1" fill="#000"/><rect x="7" y="7" width="3" height="1" fill="#000"/><rect x="12" y="7" width="1" height="1" fill="#000"/><rect x="15" y="7" width="1" height="1" fill="#000"/><rect x="17" y="7" width="1" height="1" fill="#000"/><rect x="9.1" y="8.5" width="10" height="9.5" fill="#f4f6fa"/><path d="M9.1,8.5 V18 H19.1" stroke="#000" stroke-width="1.1" fill="none"/><rect x="10.5" y="9.2" width="3.8" height="2.2" fill="#0010d0"/><rect x="13.7" y="11.6" width="3.6" height="2.2" fill="#0010d0"/><rect x="16.5" y="13.6" width="2.6" height="1.8" fill="#0010d0"/><rect x="10.7" y="14.4" width="3.6" height="2.6" fill="#0010d0"/></svg></div>
<div class="tb" style="left:806px"><svg width="23" height="22" viewBox="0 0 23 22" style="position:absolute;left:-1px;top:-1px" shape-rendering="auto"><path d="M5.4,3.4 L6.2,4.4 V6 L8.2,7.6 V8.4 L6.2,7.8 V8.8 L7,9.4 V9.8 H3.8 V9.4 L4.6,8.8 V7.8 L2.6,8.4 V7.6 L4.6,6 V4.4 Z" fill="#000"/><rect x="9.2" y="8.5" width="9.6" height="9.5" fill="#f0f2f6"/><path d="M9.2,8.5 V18 H19.0" stroke="#000" stroke-width="1.1" fill="none"/><rect x="10.799999999999999" y="12" width="1.2" height="5.4" fill="#2040c0"/><rect x="12.399999999999999" y="10.6" width="1.4" height="6.8" fill="#20a060"/><rect x="14.799999999999999" y="12.6" width="1.2" height="4.8" fill="#20a060"/><rect x="16.4" y="11" width="1.2" height="6.4" fill="#d05050"/></svg></div>
<div class="tb" style="left:829px"><svg width="23" height="22" viewBox="0 0 23 22" style="position:absolute;left:-1px;top:-1px" shape-rendering="auto"><path d="M7.7,5.699999999999999 V4.3 H3 L5.585000000000001,7.55 L3,10.8 H7.7 V9.4" fill="none" stroke="#000" stroke-width="1.6"/><rect x="9" y="8.5" width="9.6" height="9.5" fill="#f0f2f6"/><path d="M9,8.5 V18 H18.8" stroke="#000" stroke-width="1.1" fill="none"/><rect x="10.6" y="12" width="1.2" height="5.4" fill="#2040c0"/><rect x="12.2" y="10.6" width="1.4" height="6.8" fill="#20a060"/><rect x="14.6" y="12.6" width="1.2" height="4.8" fill="#20a060"/><rect x="16.2" y="11" width="1.2" height="6.4" fill="#d05050"/></svg></div>
<div class="tb" style="left:852px"><svg width="23" height="22" viewBox="0 0 23 22" style="position:absolute;left:-1px;top:-1px" shape-rendering="auto"><rect x="4" y="4" width="4" height="1" fill="#000"/><rect x="9" y="4" width="4" height="1" fill="#000"/><rect x="14" y="4" width="4" height="1" fill="#000"/><rect x="4" y="5" width="1" height="1" fill="#000"/><rect x="7" y="5" width="1" height="1" fill="#000"/><rect x="9" y="5" width="1" height="1" fill="#000"/><rect x="12" y="5" width="1" height="1" fill="#000"/><rect x="14" y="5" width="1" height="1" fill="#000"/><rect x="17" y="5" width="1" height="1" fill="#000"/><rect x="4" y="6" width="1" height="1" fill="#000"/><rect x="7" y="6" width="1" height="1" fill="#000"/><rect x="9" y="6" width="1" height="1" fill="#000"/><rect x="12" y="6" width="1" height="1" fill="#000"/><rect x="14" y="6" width="1" height="1" fill="#000"/><rect x="17" y="6" width="1" height="1" fill="#000"/><rect x="4" y="7" width="4" height="1" fill="#000"/><rect x="9" y="7" width="4" height="1" fill="#000"/><rect x="14" y="7" width="4" height="1" fill="#000"/><rect x="4" y="8" width="1" height="1" fill="#000"/><rect x="7" y="8" width="1" height="1" fill="#000"/><rect x="9" y="8" width="1" height="1" fill="#000"/><rect x="14" y="8" width="1" height="1" fill="#000"/><rect x="4" y="9" width="1" height="1" fill="#000"/><rect x="7" y="9" width="1" height="1" fill="#000"/><rect x="9" y="9" width="1" height="1" fill="#000"/><rect x="14" y="9" width="1" height="1" fill="#000"/><rect x="6" y="10.8" width="12.6" height="7" fill="#e8eefa"/><path d="M6,10.8 V18 H18.8" stroke="#000" stroke-width="1.1" fill="none"/><rect x="7.4" y="12.2" width="1.3" height="5.300000000000001" fill="#1020c8"/><rect x="9.8" y="14" width="1.3" height="3.5" fill="#1020c8"/><rect x="12.2" y="12.4" width="1.3" height="5.1" fill="#1020c8"/><rect x="14.6" y="14.4" width="1.3" height="3.0999999999999996" fill="#1020c8"/><rect x="17.0" y="12.8" width="1.3" height="4.699999999999999" fill="#1020c8"/></svg></div>
<div class="tb" style="left:875px"><svg width="23" height="22" viewBox="0 0 23 22" style="position:absolute;left:-1px;top:-1px" shape-rendering="auto"><path d="M7.7,5.699999999999999 V4.3 H3 L5.585000000000001,7.55 L3,10.8 H7.7 V9.4" fill="none" stroke="#000" stroke-width="1.5"/><rect x="6.2" y="10.8" width="12.6" height="7" fill="#e8eefa"/><path d="M6.2,10.8 V18 H19.0" stroke="#000" stroke-width="1.1" fill="none"/><rect x="7.6" y="12.2" width="1.3" height="5.300000000000001" fill="#1020c8"/><rect x="10.0" y="14" width="1.3" height="3.5" fill="#1020c8"/><rect x="12.399999999999999" y="12.4" width="1.3" height="5.1" fill="#1020c8"/><rect x="14.799999999999999" y="14.4" width="1.3" height="3.0999999999999996" fill="#1020c8"/><rect x="17.2" y="12.8" width="1.3" height="4.699999999999999" fill="#1020c8"/></svg></div>
<div class="tb" style="left:898px"><svg width="23" height="22" viewBox="0 0 23 22" style="position:absolute;left:-1px;top:-1px" shape-rendering="auto"><rect x="3" y="3" width="2" height="1" fill="#000"/><rect x="8" y="3" width="3" height="1" fill="#000"/><rect x="3" y="4" width="1" height="1" fill="#000"/><rect x="5" y="4" width="1" height="1" fill="#000"/><rect x="7" y="4" width="1" height="1" fill="#000"/><rect x="3" y="5" width="1" height="1" fill="#000"/><rect x="5" y="5" width="1" height="1" fill="#000"/><rect x="7" y="5" width="1" height="1" fill="#000"/><rect x="3" y="6" width="2" height="1" fill="#000"/><rect x="7" y="6" width="1" height="1" fill="#000"/><rect x="9" y="6" width="2" height="1" fill="#000"/><rect x="3" y="7" width="1" height="1" fill="#000"/><rect x="5" y="7" width="1" height="1" fill="#000"/><rect x="7" y="7" width="1" height="1" fill="#000"/><rect x="10" y="7" width="1" height="1" fill="#000"/><rect x="3" y="8" width="1" height="1" fill="#000"/><rect x="5" y="8" width="1" height="1" fill="#000"/><rect x="7" y="8" width="1" height="1" fill="#000"/><rect x="10" y="8" width="1" height="1" fill="#000"/><rect x="3" y="9" width="2" height="1" fill="#000"/><rect x="8" y="9" width="3" height="1" fill="#000"/><circle cx="14.6" cy="13.9" r="3.9" fill="#000"/><path d="M14.6,13.9 L14.6,10.4 A3.5,3.5 0 0 1 18.1,13.9 Z" fill="#1030e0"/><path d="M14.6,13.9 L11.1,13.9 A3.5,3.5 0 0 1 14.6,10.4 Z" fill="#30c8e8"/><path d="M14.6,13.9 L14.6,17.4 A3.5,3.5 0 0 1 11.1,13.9 Z" fill="#e82020"/><path d="M14.6,13.9 L18.1,13.9 A3.5,3.5 0 0 1 14.6,17.4 Z" fill="#f0e020"/></svg></div>
<div class="tb" style="left:921px"><svg width="23" height="22" viewBox="0 0 23 22" style="position:absolute;left:-1px;top:-1px" shape-rendering="auto"><path d="M7.7,5.699999999999999 V4.3 H3 L5.585000000000001,7.55 L3,10.8 H7.7 V9.4" fill="none" stroke="#000" stroke-width="1.5"/><circle cx="14.4" cy="13.9" r="3.9" fill="#000"/><path d="M14.4,13.9 L14.4,10.4 A3.5,3.5 0 0 1 17.9,13.9 Z" fill="#1030e0"/><path d="M14.4,13.9 L10.9,13.9 A3.5,3.5 0 0 1 14.4,10.4 Z" fill="#30c8e8"/><path d="M14.4,13.9 L14.4,17.4 A3.5,3.5 0 0 1 10.9,13.9 Z" fill="#e82020"/><path d="M14.4,13.9 L17.9,13.9 A3.5,3.5 0 0 1 14.4,17.4 Z" fill="#f0e020"/></svg></div>
<div class="tb" style="left:944px"><svg width="23" height="22" viewBox="0 0 23 22" style="position:absolute;left:-1px;top:-1px" shape-rendering="auto"><rect x="5" y="4" width="4" height="1" fill="#000"/><rect x="5" y="5" width="1" height="1" fill="#000"/><rect x="5" y="6" width="4" height="1" fill="#000"/><rect x="8" y="7" width="1" height="1" fill="#000"/><rect x="8" y="8" width="1" height="1" fill="#000"/><rect x="5" y="9" width="4" height="1" fill="#000"/><path d="M11.8,5 L14.2,7.6 L11.8,10.2 Z M13.4,7 H16 L15,4.6 L17,7 H18.8 V8.2 H17 L15,10.6 L16,8.2 H13.4 Z" fill="#1020e0"/><path d="M10,10.8 L7.6,13.3 L10,15.8 Z M8.4,12.7 H5.8 L6.8,10.8 L4.8,12.7 H2.9 V13.9 H4.8 L6.8,15.8 L5.8,13.9 H8.4 Z" fill="#f02020"/><rect x="13" y="12" width="3" height="1" fill="#000"/><rect x="13" y="13" width="1" height="1" fill="#000"/><rect x="16" y="13" width="1" height="1" fill="#000"/><rect x="13" y="14" width="3" height="1" fill="#000"/><rect x="13" y="15" width="1" height="1" fill="#000"/><rect x="15" y="15" width="1" height="1" fill="#000"/><rect x="13" y="16" width="1" height="1" fill="#000"/><rect x="16" y="16" width="1" height="1" fill="#000"/><rect x="13" y="17" width="1" height="1" fill="#000"/><rect x="16" y="17" width="1" height="1" fill="#000"/></svg></div>
<div class="tb" style="left:967px"><svg width="23" height="22" viewBox="0 0 23 22" style="position:absolute;left:-1px;top:-1px" shape-rendering="auto"><rect x="3" y="3" width="16" height="15" fill="#f00000"/><rect x="4" y="4" width="14" height="13" fill="none" stroke="#f8a0a0" stroke-width="0.8"/><rect x="7" y="6" width="3" height="1" fill="#400000"/><rect x="7" y="7" width="1" height="1" fill="#400000"/><rect x="9" y="7" width="1" height="1" fill="#400000"/><rect x="7" y="8" width="1" height="1" fill="#400000"/><rect x="9" y="8" width="1" height="1" fill="#400000"/><rect x="7" y="9" width="1" height="1" fill="#400000"/><rect x="9" y="9" width="1" height="1" fill="#400000"/><rect x="7" y="10" width="3" height="1" fill="#400000"/><rect x="10" y="9" width="5" height="1" fill="#400000"/><rect x="12" y="10" width="1" height="1" fill="#400000"/><rect x="12" y="11" width="1" height="1" fill="#400000"/><rect x="12" y="12" width="1" height="1" fill="#400000"/><rect x="12" y="13" width="1" height="1" fill="#400000"/><rect x="12" y="14" width="1" height="1" fill="#400000"/></svg></div>
<div class="tb" style="left:998px"><svg width="23" height="22" viewBox="0 0 23 22" style="position:absolute;left:-1px;top:-1px" shape-rendering="auto"><path d="M7.8,8 C7.8,3.4 13.6,3.4 13.6,7 C13.6,9.6 10.8,9.6 10.8,12.6" fill="none" stroke="#000" stroke-width="2.2"/><rect x="9.7" y="14.6" width="2.3" height="2.4" fill="#000"/></svg></div>
<div class="a" style="left:0;top:976px;width:1280px;height:48px;background:#899eb8"></div>
<div class="a" style="left:0;top:977px;width:1280px;height:1px;background:#c4d2e2"></div>
<div class="t" style="left:3px;top:981px;font-size:11.5px;letter-spacing:-0.45px">Ready</div>
<div class="sp" style="left:352px;width:27px"><div class="t" style="left:1px;top:0px;font-size:11.5px;letter-spacing:-0.4px"></div></div>
<div class="sp" style="left:381px;width:31px"><div class="t" style="left:1px;top:0px;font-size:11.5px;letter-spacing:-0.4px">NUM</div></div>
<div class="sp" style="left:414px;width:34px"><div class="t" style="left:1px;top:0px;font-size:11.5px;letter-spacing:-0.4px"></div></div>
<div class="sp" style="left:450px;width:84px"><div class="t" style="left:1px;top:0px;font-size:11.5px;letter-spacing:-0.4px">Unclassified</div></div>
<div class="sp" style="left:536px;width:98px"><div class="t" style="left:1px;top:0px;font-size:11.5px;letter-spacing:-0.4px">June 20, 2000</div></div>
<div class="sp" style="left:636px;width:110px"><div class="t" style="left:1px;top:0px;font-size:11.5px;letter-spacing:-0.4px"></div></div>
<div class="sp" style="left:748px;width:204px"><div class="t" style="left:1px;top:0px;font-size:11.5px;letter-spacing:-0.4px">LAT 181251N&nbsp;&nbsp; LONG 0391331E</div></div>
<div class="sp" style="left:954px;width:326px"><div class="t" style="left:1px;top:0px;font-size:11.5px;letter-spacing:-0.4px"></div></div>
<div class="a" style="left:0;top:997px;width:1280px;height:1px;background:#c4d2e2"></div>
<div class="tk" style="left:2px;width:54px"><svg width="17" height="15" viewBox="0 0 17 15" style="position:absolute;left:3px;top:3px"><path d="M5,2 C7,0.4 9,0.4 10.6,1.4 C12.6,2.6 14.4,2.4 16,1.2 L16.4,11.6 C14.4,13.2 12.4,13 10.8,12 C9,11 7,11 5.4,12.4 Z" fill="#000"/><path d="M6.4,3 C7.6,2.2 8.8,2 10,2.6 L10,6.4 C8.8,5.8 7.6,6 6.4,6.8 Z" fill="#e82020"/><path d="M11,3 C12.4,3.8 13.8,3.6 15,3 L15,6.8 C13.8,7.4 12.4,7.4 11,6.8 Z" fill="#20c020"/><path d="M6.4,7.8 C7.6,7 8.8,6.8 10,7.4 L10,11 C8.8,10.4 7.6,10.6 6.4,11.4 Z" fill="#2030e8"/><path d="M11,7.8 C12.4,8.4 13.8,8.4 15,7.8 L15,11.2 C13.8,11.8 12.4,11.8 11,11.2 Z" fill="#f0e020"/><path d="M1,3.5 H4 M0,5.5 H4" stroke="#000" stroke-width="1" stroke-dasharray="1 1"/><path d="M1,4.5 H4 M0.5,6.5 H4" stroke="#e82020" stroke-width="1" stroke-dasharray="1.4 0.8"/><path d="M1,8.5 H4 M0,10.5 H4" stroke="#2030e8" stroke-width="1" stroke-dasharray="1.4 0.8"/><path d="M1,7.5 H4 M0.5,9.5 H4 M1,11.5 H4" stroke="#000" stroke-width="1" stroke-dasharray="1 1"/></svg><div class="t" style="left:22px;font-weight:bold;font-size:12px;letter-spacing:-0.2px">Start</div></div>
<div class="tk" style="left:60px"><svg width="16" height="17" viewBox="0 0 16 17" style="position:absolute;left:3px;top:2px"><path d="M8,1.4 C12.6,1.4 15.6,3.6 15.6,6.6 C15.6,9.4 13.4,11.4 10.4,11.8 L11.4,14.8 L7,12 C3,11.8 0.5,9.6 0.5,6.6 C0.5,3.6 3.4,1.4 8,1.4 Z" fill="#f6ea20" stroke="#000" stroke-width="1.2"/><path d="M3.2,5.6 C4,3.6 6.6,4 8,5.2 C9.4,4 12,3.6 12.8,5.6 C12.4,8 9.8,9.4 8,9.4 C6.2,9.4 3.6,8 3.2,5.6 Z" fill="#e01010"/></svg><div class="t">22 ...</div></div>
<div class="tk" style="left:113px"><svg width="16" height="17" viewBox="0 0 16 17" style="position:absolute;left:3px;top:2px"><rect x="1" y="0" width="14" height="6" fill="#e8e8e8" opacity="0.35"/><rect x="2" y="0" width="1" height="1" fill="#000"/><rect x="4" y="0" width="1" height="1" fill="#000"/><rect x="6" y="0" width="1" height="1" fill="#000"/><rect x="9" y="0" width="3" height="1" fill="#000"/><rect x="2" y="1" width="1" height="1" fill="#000"/><rect x="4" y="1" width="1" height="1" fill="#000"/><rect x="6" y="1" width="1" height="1" fill="#000"/><rect x="8" y="1" width="1" height="1" fill="#000"/><rect x="2" y="2" width="2" height="1" fill="#000"/><rect x="5" y="2" width="2" height="1" fill="#000"/><rect x="9" y="2" width="2" height="1" fill="#000"/><rect x="2" y="3" width="1" height="1" fill="#000"/><rect x="6" y="3" width="1" height="1" fill="#000"/><rect x="11" y="3" width="1" height="1" fill="#000"/><rect x="2" y="4" width="1" height="1" fill="#000"/><rect x="6" y="4" width="1" height="1" fill="#000"/><rect x="8" y="4" width="3" height="1" fill="#000"/><rect x="2" y="5" width="1" height="1" fill="#000"/><rect x="6" y="5" width="1" height="1" fill="#000"/><rect x="0" y="6" width="9" height="10" fill="#e01018"/><path d="M2,15 L5.4,6.4 L8.6,6.4 L5.4,15 Z" fill="#e020c0"/><rect x="2.4" y="9" width="2" height="3.4" fill="#f4c0e8"/><path d="M0,6 V16 H9" stroke="#400" stroke-width="0.8" fill="none"/><circle cx="11.8" cy="10.4" r="3.2" fill="none" stroke="#000" stroke-width="4.4"/><circle cx="11.8" cy="10.4" r="3.2" fill="none" stroke="#f6f220" stroke-width="3"/><rect x="11.6" y="9.6" width="4.6" height="1.6" fill="#000"/><circle cx="11.8" cy="10.4" r="1.2" fill="#000"/><rect x="9.6" y="4.6" width="4.4" height="2.4" fill="#f6f220"/></svg><div class="t">Co...</div></div>
<div class="tk" style="left:166px"><svg width="16" height="17" viewBox="0 0 16 17" style="position:absolute;left:3px;top:2px"><rect x="1" y="0" width="14" height="6" fill="#e8e8e8" opacity="0.35"/><rect x="2" y="0" width="1" height="1" fill="#000"/><rect x="4" y="0" width="1" height="1" fill="#000"/><rect x="6" y="0" width="1" height="1" fill="#000"/><rect x="9" y="0" width="3" height="1" fill="#000"/><rect x="2" y="1" width="1" height="1" fill="#000"/><rect x="4" y="1" width="1" height="1" fill="#000"/><rect x="6" y="1" width="1" height="1" fill="#000"/><rect x="8" y="1" width="1" height="1" fill="#000"/><rect x="2" y="2" width="2" height="1" fill="#000"/><rect x="5" y="2" width="2" height="1" fill="#000"/><rect x="9" y="2" width="2" height="1" fill="#000"/><rect x="2" y="3" width="1" height="1" fill="#000"/><rect x="6" y="3" width="1" height="1" fill="#000"/><rect x="11" y="3" width="1" height="1" fill="#000"/><rect x="2" y="4" width="1" height="1" fill="#000"/><rect x="6" y="4" width="1" height="1" fill="#000"/><rect x="8" y="4" width="3" height="1" fill="#000"/><rect x="2" y="5" width="1" height="1" fill="#000"/><rect x="6" y="5" width="1" height="1" fill="#000"/><rect x="0" y="6" width="9" height="10" fill="#e01018"/><path d="M2,15 L5.4,6.4 L8.6,6.4 L5.4,15 Z" fill="#e020c0"/><rect x="2.4" y="9" width="2" height="3.4" fill="#f4c0e8"/><path d="M0,6 V16 H9" stroke="#400" stroke-width="0.8" fill="none"/><circle cx="11.8" cy="10.4" r="3.2" fill="none" stroke="#000" stroke-width="4.4"/><circle cx="11.8" cy="10.4" r="3.2" fill="none" stroke="#f6f220" stroke-width="3"/><rect x="11.6" y="9.6" width="4.6" height="1.6" fill="#000"/><circle cx="11.8" cy="10.4" r="1.2" fill="#000"/><rect x="9.6" y="4.6" width="4.4" height="2.4" fill="#f6f220"/></svg><div class="t">C:\...</div></div>
<div class="tk" style="left:219px"><svg width="16" height="17" viewBox="0 0 16 17" style="position:absolute;left:3px;top:2px"><rect x="1" y="0" width="14" height="6" fill="#e8e8e8" opacity="0.35"/><rect x="2" y="0" width="1" height="1" fill="#000"/><rect x="4" y="0" width="1" height="1" fill="#000"/><rect x="6" y="0" width="1" height="1" fill="#000"/><rect x="9" y="0" width="3" height="1" fill="#000"/><rect x="2" y="1" width="1" height="1" fill="#000"/><rect x="4" y="1" width="1" height="1" fill="#000"/><rect x="6" y="1" width="1" height="1" fill="#000"/><rect x="8" y="1" width="1" height="1" fill="#000"/><rect x="2" y="2" width="2" height="1" fill="#000"/><rect x="5" y="2" width="2" height="1" fill="#000"/><rect x="9" y="2" width="2" height="1" fill="#000"/><rect x="2" y="3" width="1" height="1" fill="#000"/><rect x="6" y="3" width="1" height="1" fill="#000"/><rect x="11" y="3" width="1" height="1" fill="#000"/><rect x="2" y="4" width="1" height="1" fill="#000"/><rect x="6" y="4" width="1" height="1" fill="#000"/><rect x="8" y="4" width="3" height="1" fill="#000"/><rect x="2" y="5" width="1" height="1" fill="#000"/><rect x="6" y="5" width="1" height="1" fill="#000"/><rect x="0" y="6" width="9" height="10" fill="#e01018"/><path d="M2,15 L5.4,6.4 L8.6,6.4 L5.4,15 Z" fill="#e020c0"/><rect x="2.4" y="9" width="2" height="3.4" fill="#f4c0e8"/><path d="M0,6 V16 H9" stroke="#400" stroke-width="0.8" fill="none"/><circle cx="11.8" cy="10.4" r="3.2" fill="none" stroke="#000" stroke-width="4.4"/><circle cx="11.8" cy="10.4" r="3.2" fill="none" stroke="#f6f220" stroke-width="3"/><rect x="11.6" y="9.6" width="4.6" height="1.6" fill="#000"/><circle cx="11.8" cy="10.4" r="1.2" fill="#000"/><rect x="9.6" y="4.6" width="4.4" height="2.4" fill="#f6f220"/></svg><div class="t">C:\j...</div></div>
<div class="tk" style="left:272px"><svg width="16" height="17" viewBox="0 0 16 17" style="position:absolute;left:3px;top:2px"><rect x="1" y="0" width="14" height="6" fill="#e8e8e8" opacity="0.35"/><rect x="2" y="0" width="1" height="1" fill="#000"/><rect x="4" y="0" width="1" height="1" fill="#000"/><rect x="6" y="0" width="1" height="1" fill="#000"/><rect x="9" y="0" width="3" height="1" fill="#000"/><rect x="2" y="1" width="1" height="1" fill="#000"/><rect x="4" y="1" width="1" height="1" fill="#000"/><rect x="6" y="1" width="1" height="1" fill="#000"/><rect x="8" y="1" width="1" height="1" fill="#000"/><rect x="2" y="2" width="2" height="1" fill="#000"/><rect x="5" y="2" width="2" height="1" fill="#000"/><rect x="9" y="2" width="2" height="1" fill="#000"/><rect x="2" y="3" width="1" height="1" fill="#000"/><rect x="6" y="3" width="1" height="1" fill="#000"/><rect x="11" y="3" width="1" height="1" fill="#000"/><rect x="2" y="4" width="1" height="1" fill="#000"/><rect x="6" y="4" width="1" height="1" fill="#000"/><rect x="8" y="4" width="3" height="1" fill="#000"/><rect x="2" y="5" width="1" height="1" fill="#000"/><rect x="6" y="5" width="1" height="1" fill="#000"/><rect x="0" y="6" width="9" height="10" fill="#e01018"/><path d="M2,15 L5.4,6.4 L8.6,6.4 L5.4,15 Z" fill="#e020c0"/><rect x="2.4" y="9" width="2" height="3.4" fill="#f4c0e8"/><path d="M0,6 V16 H9" stroke="#400" stroke-width="0.8" fill="none"/><circle cx="11.8" cy="10.4" r="3.2" fill="none" stroke="#000" stroke-width="4.4"/><circle cx="11.8" cy="10.4" r="3.2" fill="none" stroke="#f6f220" stroke-width="3"/><rect x="11.6" y="9.6" width="4.6" height="1.6" fill="#000"/><circle cx="11.8" cy="10.4" r="1.2" fill="#000"/><rect x="9.6" y="4.6" width="4.4" height="2.4" fill="#f6f220"/></svg><div class="t">C:\j...</div></div>
<div class="tk" style="left:325px"><svg width="16" height="17" viewBox="0 0 16 17" style="position:absolute;left:3px;top:2px"><path d="M1,3 L2,1.5 H6 L7,3 H14 V12 H1 Z" fill="#f8f29a" stroke="#b0a040" stroke-width="0.6"/><path d="M1,12.4 H14 V3.4" stroke="#000" stroke-width="1.1" fill="none"/><circle cx="5" cy="7.4" r="3" fill="#a0f0f0" stroke="#000" stroke-width="1.3"/><path d="M7.6,10 L13.6,15.4" stroke="#000" stroke-width="3.2"/><path d="M8,10 L13.4,14.8" stroke="#1848f0" stroke-width="1.8"/></svg><div class="t">Ex...</div></div>
<div class="tk" style="left:378px"><svg width="16" height="17" viewBox="0 0 16 17" style="position:absolute;left:3px;top:2px"><rect x="1" y="0" width="14" height="6" fill="#e8e8e8" opacity="0.35"/><rect x="2" y="0" width="1" height="1" fill="#000"/><rect x="4" y="0" width="1" height="1" fill="#000"/><rect x="6" y="0" width="1" height="1" fill="#000"/><rect x="9" y="0" width="3" height="1" fill="#000"/><rect x="2" y="1" width="1" height="1" fill="#000"/><rect x="4" y="1" width="1" height="1" fill="#000"/><rect x="6" y="1" width="1" height="1" fill="#000"/><rect x="8" y="1" width="1" height="1" fill="#000"/><rect x="2" y="2" width="2" height="1" fill="#000"/><rect x="5" y="2" width="2" height="1" fill="#000"/><rect x="9" y="2" width="2" height="1" fill="#000"/><rect x="2" y="3" width="1" height="1" fill="#000"/><rect x="6" y="3" width="1" height="1" fill="#000"/><rect x="11" y="3" width="1" height="1" fill="#000"/><rect x="2" y="4" width="1" height="1" fill="#000"/><rect x="6" y="4" width="1" height="1" fill="#000"/><rect x="8" y="4" width="3" height="1" fill="#000"/><rect x="2" y="5" width="1" height="1" fill="#000"/><rect x="6" y="5" width="1" height="1" fill="#000"/><rect x="0" y="6" width="9" height="10" fill="#e01018"/><path d="M2,15 L5.4,6.4 L8.6,6.4 L5.4,15 Z" fill="#e020c0"/><rect x="2.4" y="9" width="2" height="3.4" fill="#f4c0e8"/><path d="M0,6 V16 H9" stroke="#400" stroke-width="0.8" fill="none"/><circle cx="11.8" cy="10.4" r="3.2" fill="none" stroke="#000" stroke-width="4.4"/><circle cx="11.8" cy="10.4" r="3.2" fill="none" stroke="#f6f220" stroke-width="3"/><rect x="11.6" y="9.6" width="4.6" height="1.6" fill="#000"/><circle cx="11.8" cy="10.4" r="1.2" fill="#000"/><rect x="9.6" y="4.6" width="4.4" height="2.4" fill="#f6f220"/></svg><div class="t">Cla...</div></div>
<div class="tk" style="left:431px"><svg width="16" height="17" viewBox="0 0 16 17" style="position:absolute;left:3px;top:2px"><rect x="1" y="0" width="14" height="6" fill="#e8e8e8" opacity="0.35"/><rect x="2" y="0" width="1" height="1" fill="#000"/><rect x="4" y="0" width="1" height="1" fill="#000"/><rect x="6" y="0" width="1" height="1" fill="#000"/><rect x="9" y="0" width="3" height="1" fill="#000"/><rect x="2" y="1" width="1" height="1" fill="#000"/><rect x="4" y="1" width="1" height="1" fill="#000"/><rect x="6" y="1" width="1" height="1" fill="#000"/><rect x="8" y="1" width="1" height="1" fill="#000"/><rect x="2" y="2" width="2" height="1" fill="#000"/><rect x="5" y="2" width="2" height="1" fill="#000"/><rect x="9" y="2" width="2" height="1" fill="#000"/><rect x="2" y="3" width="1" height="1" fill="#000"/><rect x="6" y="3" width="1" height="1" fill="#000"/><rect x="11" y="3" width="1" height="1" fill="#000"/><rect x="2" y="4" width="1" height="1" fill="#000"/><rect x="6" y="4" width="1" height="1" fill="#000"/><rect x="8" y="4" width="3" height="1" fill="#000"/><rect x="2" y="5" width="1" height="1" fill="#000"/><rect x="6" y="5" width="1" height="1" fill="#000"/><rect x="0" y="6" width="9" height="10" fill="#e01018"/><path d="M2,15 L5.4,6.4 L8.6,6.4 L5.4,15 Z" fill="#e020c0"/><rect x="2.4" y="9" width="2" height="3.4" fill="#f4c0e8"/><path d="M0,6 V16 H9" stroke="#400" stroke-width="0.8" fill="none"/><circle cx="11.8" cy="10.4" r="3.2" fill="none" stroke="#000" stroke-width="4.4"/><circle cx="11.8" cy="10.4" r="3.2" fill="none" stroke="#f6f220" stroke-width="3"/><rect x="11.6" y="9.6" width="4.6" height="1.6" fill="#000"/><circle cx="11.8" cy="10.4" r="1.2" fill="#000"/><rect x="9.6" y="4.6" width="4.4" height="2.4" fill="#f6f220"/></svg><div class="t">C:\...</div></div>
<div class="tk" style="left:484px"><svg width="16" height="17" viewBox="0 0 16 17" style="position:absolute;left:3px;top:2px"><rect x="0" y="0" width="16" height="16.5" fill="#fff"/><path d="M6.4,0.8 L4.4,2.6 L6.4,4.4 M8.8,0.8 C7.2,1.8 9.8,3 8.2,4.4 M12.2,0.4 L9.8,4.4" stroke="#e02020" stroke-width="1.1" fill="none"/><path d="M2,6.6 C2,4.8 12.4,4.8 12.4,6.6 C12.4,9.4 10.8,11.6 7.2,11.6 C3.6,11.6 2,9.4 2,6.6 Z M12.4,6.8 C15.6,5.6 15.6,9.4 11.4,10 M4.6,7.8 H10 M5.6,9.6 H9 M1.2,11.4 C1.2,13.8 4.2,14.8 7.2,14.8 C10.2,14.8 13.6,13.8 13.6,11.4 M3.8,16 H10.8" stroke="#14148c" stroke-width="1.15" fill="none"/></svg><div class="t">JF...</div></div>
<div class="tk" style="left:537px"><svg width="16" height="17" viewBox="0 0 16 17" style="position:absolute;left:3px;top:2px"><rect x="0" y="0" width="16" height="16.5" fill="#fff"/><path d="M6.4,0.8 L4.4,2.6 L6.4,4.4 M8.8,0.8 C7.2,1.8 9.8,3 8.2,4.4 M12.2,0.4 L9.8,4.4" stroke="#e02020" stroke-width="1.1" fill="none"/><path d="M2,6.6 C2,4.8 12.4,4.8 12.4,6.6 C12.4,9.4 10.8,11.6 7.2,11.6 C3.6,11.6 2,9.4 2,6.6 Z M12.4,6.8 C15.6,5.6 15.6,9.4 11.4,10 M4.6,7.8 H10 M5.6,9.6 H9 M1.2,11.4 C1.2,13.8 4.2,14.8 7.2,14.8 C10.2,14.8 13.6,13.8 13.6,11.4 M3.8,16 H10.8" stroke="#14148c" stroke-width="1.15" fill="none"/></svg><div class="t">JF...</div></div>
<div class="tk" style="left:590px"><svg width="16" height="17" viewBox="0 0 16 17" style="position:absolute;left:3px;top:2px"><rect x="1" y="0" width="14" height="6" fill="#e8e8e8" opacity="0.35"/><rect x="2" y="0" width="1" height="1" fill="#000"/><rect x="4" y="0" width="1" height="1" fill="#000"/><rect x="6" y="0" width="1" height="1" fill="#000"/><rect x="9" y="0" width="3" height="1" fill="#000"/><rect x="2" y="1" width="1" height="1" fill="#000"/><rect x="4" y="1" width="1" height="1" fill="#000"/><rect x="6" y="1" width="1" height="1" fill="#000"/><rect x="8" y="1" width="1" height="1" fill="#000"/><rect x="2" y="2" width="2" height="1" fill="#000"/><rect x="5" y="2" width="2" height="1" fill="#000"/><rect x="9" y="2" width="2" height="1" fill="#000"/><rect x="2" y="3" width="1" height="1" fill="#000"/><rect x="6" y="3" width="1" height="1" fill="#000"/><rect x="11" y="3" width="1" height="1" fill="#000"/><rect x="2" y="4" width="1" height="1" fill="#000"/><rect x="6" y="4" width="1" height="1" fill="#000"/><rect x="8" y="4" width="3" height="1" fill="#000"/><rect x="2" y="5" width="1" height="1" fill="#000"/><rect x="6" y="5" width="1" height="1" fill="#000"/><rect x="0" y="6" width="9" height="10" fill="#e01018"/><path d="M2,15 L5.4,6.4 L8.6,6.4 L5.4,15 Z" fill="#e020c0"/><rect x="2.4" y="9" width="2" height="3.4" fill="#f4c0e8"/><path d="M0,6 V16 H9" stroke="#400" stroke-width="0.8" fill="none"/><circle cx="11.8" cy="10.4" r="3.2" fill="none" stroke="#000" stroke-width="4.4"/><circle cx="11.8" cy="10.4" r="3.2" fill="none" stroke="#f6f220" stroke-width="3"/><rect x="11.6" y="9.6" width="4.6" height="1.6" fill="#000"/><circle cx="11.8" cy="10.4" r="1.2" fill="#000"/><rect x="9.6" y="4.6" width="4.4" height="2.4" fill="#f6f220"/></svg><div class="t">Co...</div></div>
<div class="tk" style="left:643px"><svg width="16" height="17" viewBox="0 0 16 17" style="position:absolute;left:3px;top:2px"><path d="M1,9 L5,3 L9,1.5 L13,3 L15,7 L13.4,12 L8,15.5 L2.4,13.4 Z" fill="#000"/><path d="M5.4,3.6 L9,2.4 L8.4,8.6 L4,9 Z" fill="#2020e8"/><path d="M9.2,2.4 L12.6,3.6 L14.2,7 L12.8,10 L8.6,8.6 Z" fill="#e81010"/><path d="M1.8,9.2 L4,9 L6,13 L3,12.6 Z" fill="#e830d8"/><path d="M3,6 L5,3.4" stroke="#fff" stroke-width="1"/><text x="3.4" y="15.4" font-family="Liberation Sans, sans-serif" font-weight="bold" font-size="9.5" fill="#f8f020" stroke="#000" stroke-width="0.5" letter-spacing="-0.4" paint-order="stroke">32</text></svg><div class="t">So...</div></div>
<div class="tk" style="left:696px"><svg width="16" height="17" viewBox="0 0 16 17" style="position:absolute;left:3px;top:2px"><rect x="1" y="0" width="14" height="6" fill="#e8e8e8" opacity="0.35"/><rect x="2" y="0" width="1" height="1" fill="#000"/><rect x="4" y="0" width="1" height="1" fill="#000"/><rect x="6" y="0" width="1" height="1" fill="#000"/><rect x="9" y="0" width="3" height="1" fill="#000"/><rect x="2" y="1" width="1" height="1" fill="#000"/><rect x="4" y="1" width="1" height="1" fill="#000"/><rect x="6" y="1" width="1" height="1" fill="#000"/><rect x="8" y="1" width="1" height="1" fill="#000"/><rect x="2" y="2" width="2" height="1" fill="#000"/><rect x="5" y="2" width="2" height="1" fill="#000"/><rect x="9" y="2" width="2" height="1" fill="#000"/><rect x="2" y="3" width="1" height="1" fill="#000"/><rect x="6" y="3" width="1" height="1" fill="#000"/><rect x="11" y="3" width="1" height="1" fill="#000"/><rect x="2" y="4" width="1" height="1" fill="#000"/><rect x="6" y="4" width="1" height="1" fill="#000"/><rect x="8" y="4" width="3" height="1" fill="#000"/><rect x="2" y="5" width="1" height="1" fill="#000"/><rect x="6" y="5" width="1" height="1" fill="#000"/><rect x="0" y="6" width="9" height="10" fill="#e01018"/><path d="M2,15 L5.4,6.4 L8.6,6.4 L5.4,15 Z" fill="#e020c0"/><rect x="2.4" y="9" width="2" height="3.4" fill="#f4c0e8"/><path d="M0,6 V16 H9" stroke="#400" stroke-width="0.8" fill="none"/><circle cx="11.8" cy="10.4" r="3.2" fill="none" stroke="#000" stroke-width="4.4"/><circle cx="11.8" cy="10.4" r="3.2" fill="none" stroke="#f6f220" stroke-width="3"/><rect x="11.6" y="9.6" width="4.6" height="1.6" fill="#000"/><circle cx="11.8" cy="10.4" r="1.2" fill="#000"/><rect x="9.6" y="4.6" width="4.4" height="2.4" fill="#f6f220"/></svg><div class="t">C:\...</div></div>
<div class="tk" style="left:749px"><svg width="16" height="17" viewBox="0 0 16 17" style="position:absolute;left:3px;top:2px"><rect x="0" y="0" width="16" height="16.5" fill="#fff"/><path d="M6.4,0.8 L4.4,2.6 L6.4,4.4 M8.8,0.8 C7.2,1.8 9.8,3 8.2,4.4 M12.2,0.4 L9.8,4.4" stroke="#e02020" stroke-width="1.1" fill="none"/><path d="M2,6.6 C2,4.8 12.4,4.8 12.4,6.6 C12.4,9.4 10.8,11.6 7.2,11.6 C3.6,11.6 2,9.4 2,6.6 Z M12.4,6.8 C15.6,5.6 15.6,9.4 11.4,10 M4.6,7.8 H10 M5.6,9.6 H9 M1.2,11.4 C1.2,13.8 4.2,14.8 7.2,14.8 C10.2,14.8 13.6,13.8 13.6,11.4 M3.8,16 H10.8" stroke="#14148c" stroke-width="1.15" fill="none"/></svg><div class="t">Inf...</div></div>
<div class="tk" style="left:802px"><svg width="16" height="17" viewBox="0 0 16 17" style="position:absolute;left:3px;top:2px"><ellipse cx="7.6" cy="8" rx="7" ry="4.6" fill="#f4a040" transform="rotate(18 7.6 8)"/><circle cx="6" cy="4.6" r="1.3" fill="#e82020"/><circle cx="9" cy="4.6" r="1.3" fill="#f0e020"/><circle cx="11.6" cy="6" r="1.3" fill="#20b020"/><circle cx="13" cy="8.6" r="1.4" fill="#2020c0"/><path d="M1,1.6 L13.6,11" stroke="#201060" stroke-width="1.4"/><path d="M10,8.4 L14,11" stroke="#f0f0f0" stroke-width="1"/><text x="11" y="16.6" font-family="Liberation Sans, sans-serif" font-weight="bold" font-size="6.5" fill="#000">6</text></svg><div class="t">Jas...</div></div>
<div class="tk" style="left:855px"><svg width="16" height="17" viewBox="0 0 16 17" style="position:absolute;left:3px;top:2px"><rect x="1" y="0" width="14" height="6" fill="#e8e8e8" opacity="0.35"/><rect x="2" y="0" width="1" height="1" fill="#000"/><rect x="4" y="0" width="1" height="1" fill="#000"/><rect x="6" y="0" width="1" height="1" fill="#000"/><rect x="9" y="0" width="3" height="1" fill="#000"/><rect x="2" y="1" width="1" height="1" fill="#000"/><rect x="4" y="1" width="1" height="1" fill="#000"/><rect x="6" y="1" width="1" height="1" fill="#000"/><rect x="8" y="1" width="1" height="1" fill="#000"/><rect x="2" y="2" width="2" height="1" fill="#000"/><rect x="5" y="2" width="2" height="1" fill="#000"/><rect x="9" y="2" width="2" height="1" fill="#000"/><rect x="2" y="3" width="1" height="1" fill="#000"/><rect x="6" y="3" width="1" height="1" fill="#000"/><rect x="11" y="3" width="1" height="1" fill="#000"/><rect x="2" y="4" width="1" height="1" fill="#000"/><rect x="6" y="4" width="1" height="1" fill="#000"/><rect x="8" y="4" width="3" height="1" fill="#000"/><rect x="2" y="5" width="1" height="1" fill="#000"/><rect x="6" y="5" width="1" height="1" fill="#000"/><rect x="0" y="6" width="9" height="10" fill="#e01018"/><path d="M2,15 L5.4,6.4 L8.6,6.4 L5.4,15 Z" fill="#e020c0"/><rect x="2.4" y="9" width="2" height="3.4" fill="#f4c0e8"/><path d="M0,6 V16 H9" stroke="#400" stroke-width="0.8" fill="none"/><circle cx="11.8" cy="10.4" r="3.2" fill="none" stroke="#000" stroke-width="4.4"/><circle cx="11.8" cy="10.4" r="3.2" fill="none" stroke="#f6f220" stroke-width="3"/><rect x="11.6" y="9.6" width="4.6" height="1.6" fill="#000"/><circle cx="11.8" cy="10.4" r="1.2" fill="#000"/><rect x="9.6" y="4.6" width="4.4" height="2.4" fill="#f6f220"/></svg><div class="t">Co...</div></div>
<div class="tk" style="left:908px"><svg width="16" height="17" viewBox="0 0 16 17" style="position:absolute;left:3px;top:2px"><rect x="1" y="0" width="14" height="6" fill="#e8e8e8" opacity="0.35"/><rect x="2" y="0" width="1" height="1" fill="#000"/><rect x="4" y="0" width="1" height="1" fill="#000"/><rect x="6" y="0" width="1" height="1" fill="#000"/><rect x="9" y="0" width="3" height="1" fill="#000"/><rect x="2" y="1" width="1" height="1" fill="#000"/><rect x="4" y="1" width="1" height="1" fill="#000"/><rect x="6" y="1" width="1" height="1" fill="#000"/><rect x="8" y="1" width="1" height="1" fill="#000"/><rect x="2" y="2" width="2" height="1" fill="#000"/><rect x="5" y="2" width="2" height="1" fill="#000"/><rect x="9" y="2" width="2" height="1" fill="#000"/><rect x="2" y="3" width="1" height="1" fill="#000"/><rect x="6" y="3" width="1" height="1" fill="#000"/><rect x="11" y="3" width="1" height="1" fill="#000"/><rect x="2" y="4" width="1" height="1" fill="#000"/><rect x="6" y="4" width="1" height="1" fill="#000"/><rect x="8" y="4" width="3" height="1" fill="#000"/><rect x="2" y="5" width="1" height="1" fill="#000"/><rect x="6" y="5" width="1" height="1" fill="#000"/><rect x="0" y="6" width="9" height="10" fill="#e01018"/><path d="M2,15 L5.4,6.4 L8.6,6.4 L5.4,15 Z" fill="#e020c0"/><rect x="2.4" y="9" width="2" height="3.4" fill="#f4c0e8"/><path d="M0,6 V16 H9" stroke="#400" stroke-width="0.8" fill="none"/><circle cx="11.8" cy="10.4" r="3.2" fill="none" stroke="#000" stroke-width="4.4"/><circle cx="11.8" cy="10.4" r="3.2" fill="none" stroke="#f6f220" stroke-width="3"/><rect x="11.6" y="9.6" width="4.6" height="1.6" fill="#000"/><circle cx="11.8" cy="10.4" r="1.2" fill="#000"/><rect x="9.6" y="4.6" width="4.4" height="2.4" fill="#f6f220"/></svg><div class="t">C:\j...</div></div>
<div class="tk" style="left:961px"><svg width="16" height="17" viewBox="0 0 16 17" style="position:absolute;left:3px;top:2px"><rect x="1" y="0" width="14" height="6" fill="#e8e8e8" opacity="0.35"/><rect x="2" y="0" width="1" height="1" fill="#000"/><rect x="4" y="0" width="1" height="1" fill="#000"/><rect x="6" y="0" width="1" height="1" fill="#000"/><rect x="9" y="0" width="3" height="1" fill="#000"/><rect x="2" y="1" width="1" height="1" fill="#000"/><rect x="4" y="1" width="1" height="1" fill="#000"/><rect x="6" y="1" width="1" height="1" fill="#000"/><rect x="8" y="1" width="1" height="1" fill="#000"/><rect x="2" y="2" width="2" height="1" fill="#000"/><rect x="5" y="2" width="2" height="1" fill="#000"/><rect x="9" y="2" width="2" height="1" fill="#000"/><rect x="2" y="3" width="1" height="1" fill="#000"/><rect x="6" y="3" width="1" height="1" fill="#000"/><rect x="11" y="3" width="1" height="1" fill="#000"/><rect x="2" y="4" width="1" height="1" fill="#000"/><rect x="6" y="4" width="1" height="1" fill="#000"/><rect x="8" y="4" width="3" height="1" fill="#000"/><rect x="2" y="5" width="1" height="1" fill="#000"/><rect x="6" y="5" width="1" height="1" fill="#000"/><rect x="0" y="6" width="9" height="10" fill="#e01018"/><path d="M2,15 L5.4,6.4 L8.6,6.4 L5.4,15 Z" fill="#e020c0"/><rect x="2.4" y="9" width="2" height="3.4" fill="#f4c0e8"/><path d="M0,6 V16 H9" stroke="#400" stroke-width="0.8" fill="none"/><circle cx="11.8" cy="10.4" r="3.2" fill="none" stroke="#000" stroke-width="4.4"/><circle cx="11.8" cy="10.4" r="3.2" fill="none" stroke="#f6f220" stroke-width="3"/><rect x="11.6" y="9.6" width="4.6" height="1.6" fill="#000"/><circle cx="11.8" cy="10.4" r="1.2" fill="#000"/><rect x="9.6" y="4.6" width="4.4" height="2.4" fill="#f6f220"/></svg><div class="t">C:\...</div></div>
<div class="tk" style="left:1014px"><svg width="16" height="17" viewBox="0 0 16 17" style="position:absolute;left:3px;top:2px"><rect x="0" y="0" width="16" height="16.5" fill="#fff"/><path d="M6.4,0.8 L4.4,2.6 L6.4,4.4 M8.8,0.8 C7.2,1.8 9.8,3 8.2,4.4 M12.2,0.4 L9.8,4.4" stroke="#e02020" stroke-width="1.1" fill="none"/><path d="M2,6.6 C2,4.8 12.4,4.8 12.4,6.6 C12.4,9.4 10.8,11.6 7.2,11.6 C3.6,11.6 2,9.4 2,6.6 Z M12.4,6.8 C15.6,5.6 15.6,9.4 11.4,10 M4.6,7.8 H10 M5.6,9.6 H9 M1.2,11.4 C1.2,13.8 4.2,14.8 7.2,14.8 C10.2,14.8 13.6,13.8 13.6,11.4 M3.8,16 H10.8" stroke="#14148c" stroke-width="1.15" fill="none"/></svg><div class="t">Ag...</div></div>
<div class="tk" style="left:1067px;background:#bfcadc;border-top:1px solid #000;border-left:1px solid #000;border-right:1px solid #c4d2e2;border-bottom:1px solid #c4d2e2;box-shadow:inset 1px 1px 0 #5d6f86"><svg width="16" height="17" viewBox="0 0 16 17" style="position:absolute;left:3px;top:2px"><rect width="16" height="16.6" fill="#fff"/><path d="M4.5,1 H12 M4.5,3 H12.5" stroke="#a040c0" stroke-width="1" stroke-dasharray="1.5 0.8"/><path d="M4.5,2 H12.5 M4.5,4 H12.5 M4.5,5 H12 M5,6 H12 M5.5,7 H11.5" stroke="#e83050" stroke-width="1" stroke-dasharray="2 0.8"/><path d="M5,8.8 H13.6 M4,11.8 H13 M3,15 H12.4" stroke="#303838" stroke-width="1.3"/><path d="M4.8,9 L3,15 M13.6,9 L12.6,15" stroke="#606868" stroke-width="1.1"/><path d="M4.4,10.4 H13.2 M3.6,13.4 H12.8" stroke="#b0b4b4" stroke-width="1.2"/></svg><div class="t" style="font-weight:bold;left:23px;top:4px">D...</div></div>
<div class="a" style="left:1129px;top:1000px;width:149px;height:22px;border-top:1px solid #5d6f86;border-left:1px solid #5d6f86;border-right:1px solid #c4d2e2;border-bottom:1px solid #c4d2e2"><svg width="90" height="18" viewBox="0 0 90 18" style="position:absolute;left:1px;top:1px"><path d="M2.4,9.6 L8.6,2.4 L11.4,2 L12,16.4 L8.6,16 L2.4,10.4 Z" fill="#e8e040" stroke="#000" stroke-width="1"/><path d="M9.4,6 C11,8 11,11 9.4,13" stroke="#000" stroke-width="1" fill="none"/><path d="M11.4,2 L12,16.4" stroke="#fff" stroke-width="1"/><rect x="19" y="5" width="15" height="9" fill="#18a018" stroke="#000" stroke-width="0.9"/><path d="M21,7.5 H27 M21,9.5 H25 M21,11.5 H26" stroke="#80e080" stroke-width="1"/><rect x="27" y="9.6" width="6.4" height="4" fill="#f0e020" stroke="#000" stroke-width="0.8"/><rect x="25" y="13.6" width="6" height="2.4" fill="#e0d820" stroke="#000" stroke-width="0.7"/><rect x="36.4" y="2.4" width="15.4" height="15" fill="#a8ecec" stroke="#102020" stroke-width="1"/><path d="M37,4 H51 M37,6 H51 M37,8 H51 M37,10 H51 M37,12 H51 M37,14 H51 M37,16 H51" stroke="#40b0b0" stroke-width="0.6" stroke-dasharray="1 1"/><path d="M40.6,4.4 V16.6 M38,7.4 H43.4 M38,8.4 H43.4" stroke="#000" stroke-width="1.6" fill="none"/><rect x="46" y="4.6" width="3.4" height="12" fill="#000"/><rect x="46.6" y="5.2" width="2.2" height="3.2" fill="#e82020"/><rect x="46.6" y="8.6" width="2.2" height="3.2" fill="#f0e020"/><rect x="46.6" y="12" width="2.2" height="4" fill="#20c020"/><path d="M53.4,8.6 C53.4,4.8 57,3 61.2,3 C65.4,3 69,4.8 69,8.6 C69,12 66,13.6 62.6,13.8 L60.6,16.6 L60,13.8 C56,13.6 53.4,12 53.4,8.6 Z" fill="#0828e0"/><path d="M59.6,5.4 L64,8.4 L59.6,11.4 Z" fill="#fff"/><circle cx="59.4" cy="8.4" r="1.6" fill="#fff"/><path d="M55.6,7 C56.4,5.6 57.6,5 58.6,4.8" stroke="#fff" stroke-width="0.8" fill="none"/><ellipse cx="79" cy="5.4" rx="2.1" ry="3.4" fill="#48d048" stroke="#000" stroke-width="0.9" transform="rotate(0 79 10)"/><ellipse cx="79" cy="5.4" rx="2.1" ry="3.4" fill="#48d048" stroke="#000" stroke-width="0.9" transform="rotate(45 79 10)"/><ellipse cx="79" cy="5.4" rx="2.1" ry="3.4" fill="#48d048" stroke="#000" stroke-width="0.9" transform="rotate(90 79 10)"/><ellipse cx="79" cy="5.4" rx="2.1" ry="3.4" fill="#48d048" stroke="#000" stroke-width="0.9" transform="rotate(135 79 10)"/><ellipse cx="79" cy="5.4" rx="2.1" ry="3.4" fill="#48d048" stroke="#000" stroke-width="0.9" transform="rotate(180 79 10)"/><ellipse cx="79" cy="5.4" rx="2.1" ry="3.4" fill="#48d048" stroke="#000" stroke-width="0.9" transform="rotate(225 79 10)"/><ellipse cx="79" cy="5.4" rx="2.1" ry="3.4" fill="#48d048" stroke="#000" stroke-width="0.9" transform="rotate(270 79 10)"/><ellipse cx="79" cy="5.4" rx="2.1" ry="3.4" fill="#48d048" stroke="#000" stroke-width="0.9" transform="rotate(315 79 10)"/><circle cx="79" cy="10" r="1.7" fill="#f0e020"/></svg><div class="t" style="left:98px;top:4px;font-size:11.5px;letter-spacing:-0.5px">5:23 PM</div></div>
<div class="a" style="left:1179px;top:954px;width:101px;height:22px;background:#899eb8;border:1px solid #000"><svg width="18" height="18" viewBox="0 0 18 18" style="position:absolute;left:3px;top:2px"><path d="M3,1.5 H13 C15,1.5 16,3 16,5 V8 C16,10 15,11.5 13,11.5 H9 L10,15.5 L6,11.5 H3 C1.5,11.5 1,10 1,8 V5 C1,3 1.5,1.5 3,1.5 Z" fill="#fff" stroke="#000" stroke-width="1"/><path d="M3.5,4.5 H13.5 M3.5,6.5 H13.5 M3.5,8.5 H13.5" stroke="#000" stroke-width="0.9" stroke-dasharray="2.4 0.8"/><path d="M9,15.8 H13" stroke="#fff" stroke-width="1"/></svg><div class="t" style="left:22px;top:4px;color:#0000e0;font-size:11.5px;letter-spacing:-0.42px">Dan McFarlane</div></div>
<div class="a" style="left:347px;top:466px;width:650px;height:400px;background:#899eb8;border-right:1px solid #0c1424;border-bottom:1px solid #0c1424">
<div class="a" style="left:1px;top:1px;width:647px;height:397px;border-top:1px solid #c4d2e2;border-left:1px solid #c4d2e2"></div>
<div class="a" style="left:4px;top:4px;width:642px;height:18px;background:#4a6682"></div>
<div class="a" style="left:7px;top:7px;width:14px;height:12px;background:#c4c4c4;border-top:1px solid #fff;border-left:1px solid #fff;border-right:1px solid #000;border-bottom:1px solid #000"><div class="a" style="left:0;top:0;width:12px;height:2px;background:#0000a8"></div></div>
<div class="t" style="left:24px;top:6px;font-weight:bold;color:#fff;font-size:12px;letter-spacing:-0.15px">USS Ford</div>
<div class="wb" style="left:594px;top:6px;width:15px;height:14px;background:#8aa0b9"><svg width="16" height="14" viewBox="0 0 16 14" style="position:absolute;left:-1px;top:-1px" shape-rendering="auto"><rect x="4" y="9" width="6" height="2" fill="#000"/></svg></div>
<div class="wb" style="left:610px;top:6px;width:16px;height:14px;background:#8aa0b9"><svg width="16" height="14" viewBox="0 0 16 14" style="position:absolute;left:-1px;top:-1px" shape-rendering="auto"><rect x="3.5" y="3" width="8" height="7.5" fill="none" stroke="#000" stroke-width="1"/><rect x="3" y="2.3" width="9" height="1.6" fill="#000"/></svg></div>
<div class="wb" style="left:628px;top:6px;width:16px;height:14px;background:#8aa0b9"><svg width="16" height="14" viewBox="0 0 16 14" style="position:absolute;left:-1px;top:-1px" shape-rendering="auto"><path d="M4.4,3.2 L11.6,9.6 M11.6,3.2 L4.4,9.6" stroke="#000" stroke-width="1.5"/></svg></div>
<div class="a" style="left:4px;top:22px;width:642px;height:374px;background:#b9cce2"></div>
<div class="a" style="left:4px;top:22px;width:640px;height:372px;background:#fff"></div>
<div class="a" style="left:4px;top:22px;width:639px;height:371px;background:#e8e8e8;border-top:2px solid #4e6680;border-left:1px solid #4e6680"></div>
<div class="a" style="left:5px;top:24px;width:639px;height:1px;background:#000"></div>
<div class="a" style="left:5px;top:24px;width:1px;height:369px;background:#000"></div>
<div class="a" style="left:6px;top:25px;width:638px;height:3px;background:#ffffc8"></div>
<div class="a" style="left:6px;top:25px;width:4px;height:368px;background:#ffffc8"></div>
<div class="a" style="left:10px;top:388px;width:633px;height:5px;background:#aaaaaa"></div>
<div class="a" style="left:640px;top:28px;width:3px;height:365px;background:#aaaaaa"></div>
<div class="a" style="left:10px;top:146px;width:633px;height:4px;background:#a9a9a8"></div>
<div class="a" style="left:10px;top:150px;width:633px;height:5px;background:#ffffc8"></div>
<div class="t" style="left:14px;top:33px;">Ship Details</div>
<div class="t" style="left:14px;top:58px;">Ship Type</div>
<div class="t" style="left:14px;top:85px;">Status</div>
<div class="t" style="left:14px;top:113px;">Allegiance</div>
<div class="t" style="left:198px;top:58px;">Location</div>
<div class="t" style="left:198px;top:83.5px;">Latitude</div>
<div class="t" style="left:252.5px;top:83.5px;letter-spacing:-0.5px">184752N</div>
<div class="t" style="left:198px;top:116px;">Longitude</div>
<div class="t" style="left:252.5px;top:116px;letter-spacing:-0.5px">0402920E</div>
<div class="t" style="left:321px;top:58px;letter-spacing:-0.55px">Coverage (nm)</div>
<div class="t" style="left:321px;top:87px;letter-spacing:-0.6px">Num Of Cruise</div>
<div class="t" style="left:321px;top:100px;letter-spacing:-0.6px">Missiles</div>
<div class="t" style="left:321px;top:116px;letter-spacing:-0.6px">Cruise Missile</div>
<div class="t" style="left:321px;top:129px;letter-spacing:-0.5px">Capable</div>
<div class="t" style="left:470px;top:59px;">Note</div>
<div class="t" style="left:470px;top:72px;">Pad</div>
<div class="f b" style="left:75px;top:56px;width:115px;height:19px"><div class="t" style="left:1px;top:1px">FFG</div></div>
<div class="f b" style="left:75px;top:82px;width:115px;height:20px"><div class="t" style="left:1px;top:1px">Operational</div><div class="cb"></div></div>
<div class="f b" style="left:75px;top:108px;width:115px;height:20px"><div class="t" style="left:1px;top:0px">Friend</div><div class="cb"></div></div>
<div class="f b" style="left:407px;top:59px;width:37px;height:19px"><div class="t" style="left:2px;top:2px">0</div></div>
<div class="f b" style="left:407px;top:84px;width:37px;height:19px"><div class="t" style="left:2px;top:1px">0</div></div>
<div class="a" style="left:407px;top:120px;width:12px;height:12px;background:#fff;border-top:1px solid #303030;border-left:1px solid #303030;border-right:1px solid #b0b0b0;border-bottom:1px solid #b0b0b0"></div>
<div class="f " style="left:500px;top:56px;width:91px;height:71px"><div class="t" style="left:1px;top:1px;color:#1838a0">FFG-54</div></div>
<div class="t" style="left:13.5px;top:157.5px;">Air Unit Details</div>
<div class="t" style="left:76.5px;top:178px;">AirUnit ID</div>
<div class="t" style="left:137px;top:172.5px;">Aircraft</div>
<div class="t" style="left:137px;top:186px;">Type</div>
<div class="t" style="left:189.5px;top:172.5px;">Total No.</div>
<div class="t" style="left:189.5px;top:186px;">of Aircraft</div>
<div class="t" style="left:242px;top:172.5px;">Aircraft</div>
<div class="t" style="left:242px;top:186px;">Available</div>
<div class="t" style="left:293px;top:178px;">Status</div>
<div class="t" style="left:347.5px;top:178px;">Effectiveness</div>
<div class="t" style="left:440.5px;top:178px;">Role</div>
<div class="t" style="left:515.5px;top:178px;">Country</div>
<div class="a" style="left:17px;top:205px;width:22px;height:21px;background:#c4c4c4;border-top:1px solid #fff;border-left:1px solid #fff;border-right:2px solid #909090;border-bottom:2px solid #909090"><svg width="19" height="18" viewBox="0 0 19 18" style="position:absolute;left:0;top:0"><path d="M9.5,3 L15.5,9.4 H12 V15 H7 V9.4 H3.5 Z" fill="#8a8a8a"/></svg></div>
<div class="a" style="left:17px;top:254px;width:22px;height:21px;background:#c4c4c4;border-top:1px solid #fff;border-left:1px solid #fff;border-right:2px solid #909090;border-bottom:2px solid #909090"><svg width="19" height="18" viewBox="0 0 19 18" style="position:absolute;left:0;top:0"><path d="M9.5,15.4 L15.5,9 H12 V3.4 H7 V9 H3.5 Z" fill="#8a8a8a"/></svg></div>
<div class="a" style="left:44px;top:203px;width:22px;height:74px;background:#e8e8e8;border:1px solid #7d94b4"></div>
<div class="f " style="left:71px;top:205.5px;width:62px;height:18.5px"></div>
<div class="f " style="left:140px;top:205.5px;width:60px;height:18.5px"><div class="cb g"></div></div>
<div class="f " style="left:206px;top:205.5px;width:28px;height:18.5px"></div>
<div class="f " style="left:239px;top:205.5px;width:37px;height:18.5px"></div>
<div class="f " style="left:278.5px;top:205.5px;width:81px;height:18.5px"><div class="cb g"></div></div>
<div class="f " style="left:365.5px;top:205.5px;width:69px;height:18.5px"><div class="cb g"></div></div>
<div class="f " style="left:438px;top:205.5px;width:69px;height:18.5px"><div class="cb g"></div></div>
<div class="f " style="left:515px;top:205.5px;width:64px;height:18.5px"></div>
<div class="f " style="left:71px;top:231.5px;width:62px;height:18.5px"></div>
<div class="f " style="left:140px;top:231.5px;width:60px;height:18.5px"><div class="cb g"></div></div>
<div class="f " style="left:206px;top:231.5px;width:28px;height:18.5px"></div>
<div class="f " style="left:239px;top:231.5px;width:37px;height:18.5px"></div>
<div class="f " style="left:278.5px;top:231.5px;width:81px;height:18.5px"><div class="cb g"></div></div>
<div class="f " style="left:365.5px;top:231.5px;width:69px;height:18.5px"><div class="cb g"></div></div>
<div class="f " style="left:438px;top:231.5px;width:69px;height:18.5px"><div class="cb g"></div></div>
<div class="f " style="left:515px;top:231.5px;width:64px;height:18.5px"></div>
<div class="f " style="left:71px;top:257.5px;width:62px;height:18.5px"></div>
<div class="f " style="left:140px;top:257.5px;width:60px;height:18.5px"><div class="cb g"></div></div>
<div class="f " style="left:206px;top:257.5px;width:28px;height:18.5px"></div>
<div class="f " style="left:239px;top:257.5px;width:37px;height:18.5px"></div>
<div class="f " style="left:278.5px;top:257.5px;width:81px;height:18.5px"><div class="cb g"></div></div>
<div class="f " style="left:365.5px;top:257.5px;width:69px;height:18.5px"><div class="cb g"></div></div>
<div class="f " style="left:438px;top:257.5px;width:69px;height:18.5px"><div class="cb g"></div></div>
<div class="f " style="left:515px;top:257.5px;width:64px;height:18.5px"></div>
<div class="rd" style="left:585px;top:208.1px"><div class="a" style="left:3px;top:3px;width:3px;height:3px;background:#000;border-radius:1px"></div></div>
<div class="rd" style="left:585px;top:238.9px"></div>
<div class="rd" style="left:585px;top:260.1px"></div>
<div class="t" style="left:44px;top:293px;">Note</div>
<div class="t" style="left:44px;top:305.5px;">Pad</div>
<div class="f " style="left:74.5px;top:288.5px;width:413px;height:39px"></div>
<div class="btn" style="left:26px;top:339px"><div class="t">Cancel</div></div>
<div class="btn" style="left:123px;top:339px"><div class="t">Undo Last</div></div>
<div class="btn" style="left:506px;top:339px"><div class="t">Close</div></div>
</div>
</body></html>
